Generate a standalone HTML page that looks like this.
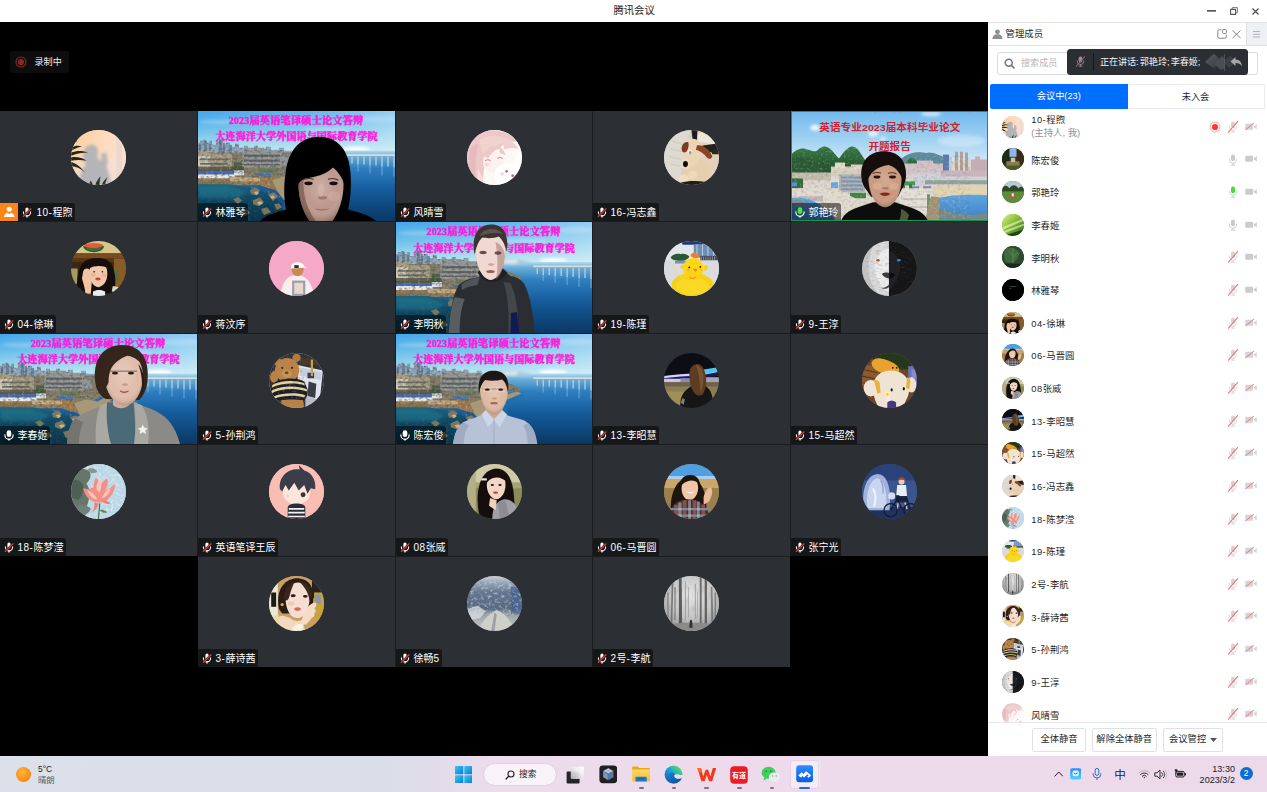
<!DOCTYPE html>
<html lang="zh-CN"><head><meta charset="utf-8"><title>腾讯会议</title><style>
*{box-sizing:border-box;margin:0;padding:0}
html,body{width:1267px;height:792px;overflow:hidden;background:#000;font-family:"Liberation Sans", "Noto Sans CJK SC", sans-serif;}
#root{position:relative;width:1267px;height:792px;overflow:hidden;background:#000}
.abs{position:absolute}
#title{left:0;top:0;width:1267px;height:22px;background:#fff;color:#1a1a1a;font-size:10.300px;line-height:22px;text-align:center}
#title span{position:absolute;left:613.500px;top:0;white-space:nowrap}
.tile{position:absolute;background:#2c2f33;overflow:hidden}
.tile .av{position:absolute;width:55px;height:55px;border-radius:50%;overflow:hidden;left:50%;margin-left:-27.5px;top:18.5px}
.lbl{position:absolute;left:0;bottom:0;height:17.600px;overflow:hidden;background:rgba(0,0,0,.5);color:#fff;font-size:10px;line-height:19.600px;padding:0 2.600px 0 17.400px;border-radius:0 3px 0 0;white-space:nowrap}
.lbl svg{position:absolute;left:4px;top:3.700px;width:10px;height:11px}
.lbl .d{letter-spacing:.55px}.row .d{letter-spacing:.5px}
.host{position:absolute;left:0;bottom:0;width:18px;height:18px;background:#ff8418}
#side{left:988px;top:22px;width:279px;height:734px;background:#fff;border-top:1px solid #e4e4e6}
.row{position:absolute;left:0;width:279px;height:32px;font-size:9.400px;color:#1f1f1f}
.row .sa{position:absolute;left:13.5px;top:5px;width:22px;height:22px;border-radius:50%;overflow:hidden}
.row .nm{position:absolute;left:43.200px;top:1.300px;line-height:32px;white-space:nowrap}
.btn{position:absolute;top:706px;height:23.5px;border:1px solid #dfe1e6;border-radius:2px;background:#fff;font-size:9.3px;line-height:21.5px;text-align:center;color:#1f1f1f;white-space:nowrap}
#task{left:0;top:756px;width:1267px;height:36px;background:linear-gradient(90deg,#dbe0ea 0px,#d9dee9 380px,#e2dcea 435px,#ecdcec 490px,#eddaeb 800px,#ecd9ea 1267px)}

.vid{position:absolute;left:0;top:0;display:block}
.vt{font-family:"Liberation Serif","Noto Serif CJK SC",serif;font-weight:900}
.vs{font-family:"Liberation Sans","Noto Sans CJK SC",sans-serif;font-weight:700}
</style></head><body><div id="root">
<svg width="0" height="0" style="position:absolute">
<defs>
<symbol id="micoff" viewBox="0 0 20 22">
  <rect x="6.800" y="1" width="6.400" height="12" rx="3.200" fill="#fff"/>
  <path d="M2.800 9.500v1a7.200 7.200 0 0 0 14.400 0v-1" fill="none" stroke="#fff" stroke-width="2.100" stroke-linecap="round"/>
  <path d="M10 17v3.200" stroke="#fff" stroke-width="2.200" stroke-linecap="round"/>
  <path d="M2.500 19L18 3.500" stroke="#17191b" stroke-width="4"/>
  <path d="M2.500 19L18 3.500" stroke="#e8392d" stroke-width="2.200" stroke-linecap="round"/>
</symbol>
<symbol id="micon" viewBox="0 0 20 22">
  <rect x="5.400" y="0.500" width="9.200" height="13.500" rx="4.600" fill="#fff"/>
  <path d="M1.800 9.500v1a8.200 8.200 0 0 0 16.400 0v-1" fill="none" stroke="#fff" stroke-width="2.300" stroke-linecap="round"/>
  <path d="M10 18v2.6" stroke="#fff" stroke-width="2.2" stroke-linecap="round"/>
</symbol>
<symbol id="mictalk" viewBox="0 0 20 22">
  <rect x="5.400" y="0.500" width="9.200" height="13.500" rx="4.600" fill="#46e83c"/>
  <path d="M1.800 9.500v1a8.200 8.200 0 0 0 16.400 0v-1" fill="none" stroke="#fff" stroke-width="2.300" stroke-linecap="round"/>
  <path d="M10 18v2.6" stroke="#fff" stroke-width="2.2" stroke-linecap="round"/>
</symbol>
<symbol id="smic" viewBox="0 0 20 24">
  <rect x="6" y="1" width="8" height="13.5" rx="4" fill="#c9cbcf"/>
  <path d="M2.8 10.5v1a7.2 7.2 0 0 0 14.4 0v-1" fill="none" stroke="#c9cbcf" stroke-width="1.8" stroke-linecap="round"/>
  <path d="M10 19v3M6.5 22.3h7" stroke="#c9cbcf" stroke-width="1.8" stroke-linecap="round"/>
</symbol>
<symbol id="smictalk" viewBox="0 0 20 24">
  <rect x="6" y="1" width="8" height="13.5" rx="4" fill="#3fe22c"/>
  <path d="M2.8 10.5v1a7.2 7.2 0 0 0 14.4 0v-1" fill="none" stroke="#c9cbcf" stroke-width="1.8" stroke-linecap="round"/>
  <path d="M10 19v3M6.5 22.3h7" stroke="#c9cbcf" stroke-width="1.8" stroke-linecap="round"/>
</symbol>
<symbol id="smicoff" viewBox="0 0 20 24">
  <rect x="6" y="1" width="8" height="13.5" rx="4" fill="#d3d4d8"/>
  <path d="M2.8 10.5v1a7.2 7.2 0 0 0 14.4 0v-1" fill="none" stroke="#d3d4d8" stroke-width="1.8" stroke-linecap="round"/>
  <path d="M10 19v3M6.5 22.3h7" stroke="#d3d4d8" stroke-width="1.8" stroke-linecap="round"/>
  <path d="M0.500 22.500L19.500 1" stroke="#f6776f" stroke-width="2.300" stroke-linecap="round"/>
</symbol>
<symbol id="scam" viewBox="0 0 26 16">
  <rect x="0.5" y="1.5" width="17" height="13" rx="2.2" fill="#c9cbcf"/>
  <path d="M18.300 8l7.200-6v12z" fill="#c9cbcf"/>
</symbol>
<symbol id="scamoff" viewBox="0 0 26 16">
  <rect x="0.5" y="1.5" width="17" height="13" rx="2.2" fill="#d3d4d8"/>
  <path d="M18.300 8l7.200-6v12z" fill="#d3d4d8"/>
  <path d="M0.500 15.500L19 0.300" stroke="#f6776f" stroke-width="2.100" stroke-linecap="round"/>
</symbol>
</defs></svg>

<div id="title" class="abs"><span>腾讯会议</span><svg class="abs" style="left:1207px;top:10.200px" width="9.200" height="1.700"><rect width="9.200" height="1.700" fill="#58595d"/></svg><svg class="abs" style="left:1229.600px;top:6.800px" width="8" height="8" viewBox="0 0 16 16"><path d="M1.200 4.800h10V14.800H1.200z" fill="none" stroke="#55565a" stroke-width="2.200" stroke-linejoin="round"/><path d="M4.500 4V1.200h10.300v10.300H12" fill="none" stroke="#6a6b70" stroke-width="1.800" stroke-linejoin="round"/></svg><svg class="abs" style="left:1252.200px;top:7.600px" width="7" height="7" viewBox="0 0 14 14"><path d="M1 1l12 12M13 1L1 13" stroke="#4a4b4f" stroke-width="2.300"/></svg></div>
<div class="abs" style="left:10.200px;top:50.500px;width:59.200px;height:22.300px;background:#0d0d0d;border-radius:3px"></div><svg class="abs" style="left:15px;top:55.500px" width="12" height="12" viewBox="0 0 12 12"><circle cx="6" cy="6" r="5" fill="none" stroke="#8a2823" stroke-width="1.100"/><circle cx="6" cy="6" r="3.100" fill="#8c2621"/></svg><div class="abs" style="left:34.500px;top:50.500px;line-height:22px;font-size:9.100px;color:#ececec;white-space:nowrap">录制中</div>
<div class="abs" style="left:0;top:111px;width:988px;height:445px;background:#1b1c1e"></div><div class="abs" style="left:198px;top:556px;width:592px;height:111px;background:#1b1c1e"></div><div class="tile" style="left:0px;top:111px;width:197px;height:110px"><div class="av"><svg width="55" height="55" viewBox="0 0 100 100" style="display:block"><defs><filter id="avb1" x="-5%" y="-5%" width="110%" height="110%"><feGaussianBlur stdDeviation="1.3"/></filter></defs><defs><linearGradient id="a1_1" x1="0" y1="0" x2="1" y2="0.35"><stop offset="0" stop-color="#fbcc9f"/><stop offset="0.5" stop-color="#fdd9b8"/><stop offset="1" stop-color="#fbe2d2"/></linearGradient><linearGradient id="a1b_1" x1="0" y1="0" x2="0" y2="1"><stop offset="0.4" stop-color="#f4dcd8" stop-opacity="0"/><stop offset="1" stop-color="#e9dcdc" stop-opacity=".8"/></linearGradient><filter id="a1f_1" x="-20%" y="-20%" width="140%" height="140%"><feGaussianBlur stdDeviation="2.600"/></filter><filter id="a1g_1" x="-20%" y="-20%" width="140%" height="140%"><feGaussianBlur stdDeviation="0.900"/></filter></defs><rect width="100" height="100" fill="#fbd6b8"/><g filter="url(#avb1)">
<rect width="100" height="100" fill="url(#a1_1)"/><rect width="100" height="100" fill="url(#a1b_1)"/><rect x="82" y="0" width="11" height="100" fill="#ecd6cf" opacity=".8" filter="url(#a1g_1)"/>
<g filter="url(#a1f_1)"><path d="M14 100c2-18 6-30 14-38-6-6-8-16-4-26 4-10 16-12 22-6 4 4 4 10 2 16l2 8c6 2 10 6 14 12 4 10 8 20 8 34z" fill="#a9aeb6" opacity=".85"/><path d="M55 44c2-4 8-4 10 0l2 14c0 4-2 6-4 8l-8-4z" fill="#a9aeb6" opacity=".8"/></g>
<g filter="url(#a1g_1)"><path d="M0 41c10-4 22-4 31 0-10 0-20 2-31 6zM0 50c10-2 20 0 28 6-10-2-18-2-28 0zM0 32c8-4 14-4 20-2-8 2-14 4-20 8zM0 58c8 2 18 8 26 20-8-8-16-12-26-12zM0 24c4-2 8-4 12-4-4 2-8 6-12 8z" fill="#222c1a"/>
<path d="M44 100c2-6 6-12 10-16-2 6-2 10-2 16zM56 100c2-6 6-10 10-14-2 6-4 10-4 14zM32 100l4-8 4 8z" fill="#2a3320"/></g></g></svg></div><div class="host"><svg viewBox="0 0 18 18" width="18" height="18"><circle cx="9.200" cy="6.300" r="2.500" fill="#fff"/><path d="M3.800 14c.5-2.800 2-4 3.600-4.300l1.800 1.600 1.800-1.600c1.600.3 3.100 1.500 3.600 4.300z" fill="#fff"/></svg></div><div class="lbl" style="left:18px;border-radius:0 3px 0 0;padding-left:18.400px"><svg><use href="#micoff"/></svg><span class="d">10-</span>程煦</div></div>
<div class="tile" style="left:198px;top:111px;width:197px;height:110px"><svg class="vid" width="197" height="110" viewBox="0 0 197 111" preserveAspectRatio="none">
<defs>
<linearGradient id="sky1" x1="0" y1="0" x2="0" y2="1"><stop offset="0" stop-color="#46a6ea"/><stop offset="0.35" stop-color="#66bdea"/><stop offset="0.7" stop-color="#9ad6ec"/><stop offset="1" stop-color="#d4eef4"/></linearGradient>
<linearGradient id="skyr1" x1="0" y1="0" x2="1" y2="0"><stop offset="0" stop-color="#fff" stop-opacity="0"/><stop offset="0.55" stop-color="#e4f4fb" stop-opacity=".18"/><stop offset="1" stop-color="#e4f4fb" stop-opacity=".5"/></linearGradient>
<linearGradient id="seaR1" x1="0" y1="0" x2="0" y2="1"><stop offset="0" stop-color="#b4dcec"/><stop offset="0.08" stop-color="#6aaed8"/><stop offset="0.25" stop-color="#2f7fc0"/><stop offset="0.55" stop-color="#155c9c"/><stop offset="1" stop-color="#0a3864"/></linearGradient>
<linearGradient id="seaL1" x1="0" y1="0" x2="0" y2="1"><stop offset="0" stop-color="#176683"/><stop offset="0.35" stop-color="#0c4a66"/><stop offset="1" stop-color="#08334a"/></linearGradient>
<linearGradient id="cty1" x1="0" y1="0" x2="0" y2="1"><stop offset="0" stop-color="#7f9bb6"/><stop offset="1" stop-color="#9fb0bc"/></linearGradient>
<filter id="b11" x="-10%" y="-10%" width="120%" height="120%"><feGaussianBlur stdDeviation="0.600"/></filter>
<filter id="b21" x="-10%" y="-10%" width="120%" height="120%"><feGaussianBlur stdDeviation="1.400"/></filter>
<filter id="b31" x="-20%" y="-20%" width="140%" height="140%"><feGaussianBlur stdDeviation="3"/></filter>
<radialGradient id="fg1" cx="0.5" cy="0.42" r="0.62"><stop offset="0" stop-color="#fff" stop-opacity=".22"/><stop offset="0.6" stop-color="#fff" stop-opacity="0"/><stop offset="1" stop-color="#3a1c10" stop-opacity=".38"/></radialGradient><filter id="bp1" x="-5%" y="-5%" width="110%" height="110%"><feGaussianBlur stdDeviation="0.450"/></filter>
<filter id="nz1" x="0" y="0" width="100%" height="100%"><feTurbulence type="fractalNoise" baseFrequency="0.3 0.38" numOctaves="2" seed="7"/><feColorMatrix type="matrix" values="0 0 0 0 0.08  0 0 0 0 0.09  0 0 0 0 0.1  0 0 0 -3.2 1.75"/></filter>
<filter id="nl1" x="0" y="0" width="100%" height="100%"><feTurbulence type="fractalNoise" baseFrequency="0.36 0.42" numOctaves="2" seed="23"/><feColorMatrix type="matrix" values="0 0 0 0 0.96  0 0 0 0 0.94  0 0 0 0 0.88  0 0 0 -3.6 1.55"/></filter>
<clipPath id="land1"><path d="M0 32h2v-2h3v-1h3v3h3v-2h3v4h4v-4h3v-2h4v6h3v-2h4v4h5v-3h4v4h5v-2h4v3h6v-3h4v3h8v-2h5v3h8v-2h5v3h8l6 2 24 13 2 3-18 4-14 10-6 18-10 6-14-4-24-10-30-6H0z"/></clipPath>
<clipPath id="bay1"><path d="M0 74h32l30 6 14 6 10 10 2 15H0z"/></clipPath>
</defs>
<rect width="197" height="46" fill="url(#sky1)"/><rect width="197" height="46" fill="url(#skyr1)"/>
<g filter="url(#b21)"><ellipse cx="158" cy="38.500" rx="14" ry="2.600" fill="#fff" opacity=".9"/><ellipse cx="128" cy="19" rx="24" ry="2.500" fill="#fff" opacity=".22"/><ellipse cx="24" cy="11" rx="22" ry="2" fill="#fff" opacity=".25"/><ellipse cx="180" cy="8" rx="20" ry="3" fill="#fff" opacity=".2"/></g>
<rect y="40" width="197" height="71" fill="url(#seaR1)"/>
<g filter="url(#b21)"><path d="M100 40c6-3 12-4 18-3 6 1 10 2 16 3v2h-34z" fill="#a9c4d6"/><path d="M108 38h14v3h-14z" fill="#e6eef2"/></g>
<g filter="url(#b11)">
<path d="M0 32h2v-2h3v-1h3v3h3v-2h3v4h4v-4h3v-2h4v6h3v-2h4v4h5v-3h4v4h5v-2h4v3h6v-3h4v3h8v-2h5v3h8v-2h5v3h8l6 2v8H0z" fill="url(#cty1)"/>
<path d="M1 33h2v11H1zM6 30h3v14H6zM11 33h2v11h-2zM21 29h3v16h-3zM25 32h2v12h-2zM31 34h3v10h-3z" fill="#5f7890" opacity=".8"/>
<path d="M0 42h94l14 6 16 6 2 3-18 2-14 8-34 8H0z" fill="#857b66"/>
<path d="M0 40h14v5H0zM12 43h22v16H12z" fill="#a59c84"/><path d="M0 45h12v14H0z" fill="#cfc8b6"/>
<path d="M44 40h40v17H44z" fill="#94968f"/><path d="M46 37h20v4H46z" fill="#8f969a"/><path d="M46 44h36v2.200H46zM46 49h36v2.200H46zM46 53.500h36v1.500H46z" fill="#5e6468"/><path d="M84 45h8v10h-8z" fill="#8f979c"/>
<path d="M2 48h28v1.800H2zM2 52.500h28v1.800H2z" fill="#6f6a5c"/><path d="M0 56h46v5H0z" fill="#4a4a38" opacity=".75"/>
<path d="M36 52h8v8h-8z" fill="#3f5a3a" opacity=".8"/><path d="M60 58h20v4H60z" fill="#5a7a4a" opacity=".7"/>
<path d="M0 61h36l1 3H0z" fill="#3a6cc8"/><path d="M0 64h37v4H0z" fill="#e8e8e6"/><path d="M36 60h10v5H36z" fill="#dfe4ea"/>
<path d="M58 63h15l-1 3H59z" fill="#3f74c4"/>
<path d="M0 68h34l30-2 18 2 8 6 4 10-6 4-10-8-20-6-30-4H0z" fill="#a07c4e"/>
<path d="M0 71h32v3.500H0z" fill="#8a7046"/><path d="M32 67h30v4H32z" fill="#c8a878"/>
</g>
<g clip-path="url(#land1)"><rect width="130" height="100" filter="url(#nz1)" opacity=".6"/><rect width="130" height="100" filter="url(#nl1)" opacity=".22"/></g>
<path d="M0 74h32l30 6 14 6 10 10 2 15H0z" fill="url(#seaL1)"/>
<g clip-path="url(#bay1)"><rect y="70" width="100" height="41" filter="url(#nz1)" opacity=".35"/></g>
<g filter="url(#b21)"><path d="M0 76h30l20 6-10 6-40 0z" fill="#2a86a0" opacity=".4"/><path d="M86 92l10-6 14-20 16-8 2 3-14 12-12 22-12 16h-8z" fill="#1d6fa6" opacity=".6"/></g>
<g filter="url(#b11)">
<path d="M74 70l12-4 12 2 10-6 14-4 4 2-14 6-10 10-8 12-8 2-6-8z" fill="#a89878"/>
<path d="M52 80l5-3 5 3-3 5-6-1zM55 90l7-3 4 5-5 4-6-2zM35 89l5-2 4 3-4 4zM63 99l6-2 4 5-7 3zM70 84l6-2 4 4-5 5zM44 101l5-2 3 4-5 3zM76 94l5-1 3 4-5 3zM28 98l4-2 3 3-4 3z" fill="#8f7c5c" opacity=".85"/>
<path d="M56 82l3-1 2 2-3 2zM59 92l4-1 2 2-4 2zM72 86l3-1 2 2-3 2z" fill="#c2b28e"/>
<path d="M138 43.600h59v2h-59z" fill="#cfdfea"/><path d="M138 45.600h59v1.200h-59z" fill="#7fa2bc"/>
<path d="M142 46v6M148 46v7M154 46v7M160 46v8M166 46v8M172 46v9M178 46v9M184 46v10M190 46v10M196 46v11" stroke="#b9cfde" stroke-width="1.300"/>
<path d="M148 53v6M160 54v7M172 55v8M184 56v9M196 57v9" stroke="#9cc4de" stroke-width="1.400" opacity=".45"/>
</g>
<text class="vt" x="98.100" y="13.100" font-size="10" text-anchor="middle" textLength="134.800" lengthAdjust="spacingAndGlyphs" fill="#fa1cdc" stroke="#fa1cdc" stroke-width="0.420">2023届英语笔译硕士论文答辩</text><text class="vt" x="98.600" y="29.600" font-size="10.400" text-anchor="middle" textLength="162.300" lengthAdjust="spacingAndGlyphs" fill="#fa1cdc" stroke="#fa1cdc" stroke-width="0.420">大连海洋大学外国语与国际教育学院</text>
<g filter="url(#bp1)">
<path d="M62 111c6-6 16-9 26-11.500-2-11-2.500-24-0.500-36C90 40 102 26 121 26c19 0 30 14 31.500 36 1 14 0 27-2.500 37.500 10 2.500 22 6 28 11.500z" fill="#060505"/>
<path d="M100.500 74c-0.500-13 8-21 22.500-21s23 8 22.500 21c0 14-4 27-11 37h-23c-7-10-11-23-11-37z" fill="#bc978c"/>
<path d="M100.500 74c-0.500-13 8-21 22.500-21s23 8 22.500 21c0 14-4 27-11 37h-23c-7-10-11-23-11-37z" fill="url(#fg1)"/>
<path d="M100.500 74c0 14 4 27 11 37h6c-8-12-13-26-12-42z" fill="#4a2e26" opacity=".45"/>
<path d="M99 78c0-16 6-24 12-26l28-1c5 4 8 12 8 24-3-8-7-14-12-18-7 7-18 10-28 11-4 2-7 5-8 10z" fill="#060505"/>
</g>
<g filter="url(#b11)">
<ellipse cx="110.500" cy="73" rx="4.200" ry="1.900" fill="#1a100e"/><ellipse cx="135.500" cy="73" rx="4.200" ry="1.900" fill="#1a100e"/>
<path d="M105 69.500q5.500-2.500 10.500-.5M130 69q5.500-2 10.500.8" stroke="#2a1a16" stroke-width="1.100" fill="none" opacity=".8"/>
<ellipse cx="124.500" cy="87.500" rx="4.500" ry="1.800" fill="#7e564c" opacity=".55"/>
<path d="M116 98.500q8.500 2.500 16.500-.5-8 4.500-16.500.5z" fill="#8e4f4c"/>
<ellipse cx="136" cy="86" rx="6" ry="5" fill="#dcb8ae" opacity=".35"/><ellipse cx="123" cy="80" rx="3" ry="7" fill="#e0beb2" opacity=".4"/>
</g></svg><div class="lbl"><svg><use href="#micoff"/></svg>林雅琴</div></div>
<div class="tile" style="left:396px;top:111px;width:196px;height:110px"><div class="av"><svg width="55" height="55" viewBox="0 0 100 100" style="display:block"><defs><filter id="avb2" x="-5%" y="-5%" width="110%" height="110%"><feGaussianBlur stdDeviation="1.3"/></filter></defs><rect width="100" height="100" fill="#f6dfe2"/><g filter="url(#avb2)"><rect width="100" height="100" fill="#fdf7f6"/>
<path d="M0 20C10 4 40-4 70 4c10 4 18 10 24 18-12-2-22 0-30 6-6 8-10 8-18 10-8 4-12 12-14 22l-4 40H0z" fill="#ecc9c8"/>
<path d="M4 40c4-10 10-14 16-14-4 20-6 44-4 74H4z" fill="#e6b4bc" opacity=".7"/>
<path d="M22 18c16-10 40-10 56 2-10 0-18 4-24 10-8 2-18 6-24 14-4-8-6-18-8-26z" fill="#f0d2cf"/>
<path d="M62 12c12 2 24 10 32 22-8-2-18-2-26 2z" fill="#efcfd0"/>
<ellipse cx="48" cy="58" rx="19" ry="19" fill="#fdf1ef"/>
<path d="M30 46c4-12 16-18 28-16-6 6-14 12-20 22zM58 30c6 2 10 8 12 16l-10-4z" fill="#ecc9c8"/>
<path d="M33 56q5-4 10 0M55 52q5-4 10 0" stroke="#e08a9a" stroke-width="2" fill="none"/>
<ellipse cx="36" cy="63" rx="4" ry="2.500" fill="#f8c8d0" opacity=".8"/>
<path d="M52 72c6-10 20-14 32-10l10-22 4 2-4 26c4 10 2 22-6 32H56c-6-8-8-18-4-28z" fill="#ffffff"/>
<circle cx="72" cy="75" r="2.500" fill="#c9647a"/><circle cx="83" cy="83" r="2.500" fill="#c9647a"/><ellipse cx="64" cy="80" rx="4" ry="3" fill="#fbd6dc"/>
<path d="M20 70l14 30H18z" fill="#f7dde2"/></g></svg></div><div class="lbl"><svg><use href="#micoff"/></svg>风晴雪</div></div>
<div class="tile" style="left:593px;top:111px;width:197px;height:110px"><div class="av"><svg width="55" height="55" viewBox="0 0 100 100" style="display:block"><defs><filter id="avb3" x="-5%" y="-5%" width="110%" height="110%"><feGaussianBlur stdDeviation="1.3"/></filter></defs><rect width="100" height="100" fill="#cfc6b6"/><g filter="url(#avb3)"><rect width="100" height="100" fill="#d6d1c8"/>
<path d="M0 0h48L36 40 28 100H0z" fill="#dedad2"/><path d="M60 0h40v100H60z" fill="#e2d2bc"/><path d="M62 6c10-4 24 0 34 10l-4 14c-10-6-20-8-30-8z" fill="#efe6da"/>
<path d="M50 0h11l-2 30-6-2z" fill="#1e1c1b"/><path d="M70 28l30-4v14l-24 4z" fill="#23211f"/><path d="M84 36h16v8H88z" fill="#2a2624"/>
<path d="M14 20l20 6M12 34l22 6M10 48l22 6M12 62l18 4" stroke="#b8b4ac" stroke-width="1.200" opacity=".7"/>
<path d="M38 60c-4 12-4 26 2 36h40c8-8 8-22 2-34-8-10-34-12-44-2z" fill="#e6cfae"/>
<path d="M34 36c0-12 8-20 18-20s16 8 16 18c0 8-2 14-4 20-4 10-12 14-20 12-8-2-12-12-10-30z" fill="#ecd5b4"/>
<ellipse cx="40" cy="62" rx="9" ry="10" fill="#efd9ba"/>
<path d="M32 34c0-8 6-14 12-12 2 6 0 14-4 18-4 2-8 0-8-6z" fill="#7c3b22"/>
<path d="M60 28c10-2 22 6 28 20-2 4-6 6-10 2-6-8-14-12-20-14z" fill="#8a4426"/>
<ellipse cx="39" cy="62" rx="4.500" ry="5.500" fill="#0f0d0c"/><ellipse cx="47.500" cy="41" rx="2.400" ry="3" fill="#2a2f52"/><ellipse cx="47" cy="40" rx="4" ry="4.500" fill="#fff" opacity=".5"/>
<ellipse cx="36" cy="88" rx="9" ry="7" fill="#f0ddc2"/><ellipse cx="52" cy="82" rx="8" ry="8" fill="#edd8b8"/>
<path d="M30 96c12-4 30-4 44-2l-2 6H34z" fill="#1d1b1a"/></g></svg></div><div class="lbl"><svg><use href="#micoff"/></svg><span class="d">16-</span>冯志鑫</div></div>
<div class="tile" style="left:791px;top:111px;width:197px;height:110px"><svg class="vid" width="197" height="110" viewBox="0 0 197 111" preserveAspectRatio="none">
<defs>
<linearGradient id="sky22" x1="0" y1="0" x2="0" y2="1"><stop offset="0" stop-color="#72b9ee"/><stop offset="0.5" stop-color="#9dd0f2"/><stop offset="1" stop-color="#d4e9f5"/></linearGradient>
<linearGradient id="hl2" x1="0" y1="0" x2="0" y2="1"><stop offset="0" stop-color="#387a44"/><stop offset="0.6" stop-color="#265a30"/><stop offset="1" stop-color="#244c2a"/></linearGradient>
<linearGradient id="w22" x1="0" y1="0" x2="0" y2="1"><stop offset="0" stop-color="#5fa6de"/><stop offset="1" stop-color="#3a80c8"/></linearGradient>
<filter id="c12" x="-10%" y="-10%" width="120%" height="120%"><feGaussianBlur stdDeviation="0.650"/></filter>
<filter id="b12" x="-10%" y="-10%" width="120%" height="120%"><feGaussianBlur stdDeviation="0.600"/></filter>
<filter id="bp2" x="-5%" y="-5%" width="110%" height="110%"><feGaussianBlur stdDeviation="0.450"/></filter>
<filter id="c22" x="-10%" y="-10%" width="120%" height="120%"><feGaussianBlur stdDeviation="1.800"/></filter>
<filter id="nz2" x="0" y="0" width="100%" height="100%"><feTurbulence type="fractalNoise" baseFrequency="0.3 0.36" numOctaves="2" seed="11"/><feColorMatrix type="matrix" values="0 0 0 0 0.1  0 0 0 0 0.14  0 0 0 0 0.12  0 0 0 -3.2 1.7"/></filter>
<filter id="nl2" x="0" y="0" width="100%" height="100%"><feTurbulence type="fractalNoise" baseFrequency="0.34 0.4" numOctaves="2" seed="31"/><feColorMatrix type="matrix" values="0 0 0 0 0.98  0 0 0 0 0.96  0 0 0 0 0.94  0 0 0 -3.4 1.5"/></filter>
<clipPath id="land22"><path d="M0 62V44c4-4 9-7 14-6 5 1 8 4 12 2 3-3 6-5 9-4 5 1 9 8 13 12 4-6 8-11 12-12 5-1 8 4 11 9l8 10 20-8 20-2 20 0 40 0v90H0z"/></clipPath>
<radialGradient id="fg2" cx="0.5" cy="0.42" r="0.62"><stop offset="0" stop-color="#fff" stop-opacity=".2"/><stop offset="0.6" stop-color="#fff" stop-opacity="0"/><stop offset="1" stop-color="#3a1c10" stop-opacity=".4"/></radialGradient>
</defs>
<rect width="197" height="54" fill="url(#sky22)"/>
<g filter="url(#c22)"><ellipse cx="24" cy="17" rx="4.500" ry="3" fill="#fff" opacity=".85"/><ellipse cx="82" cy="23" rx="5" ry="3" fill="#fff" opacity=".7"/><ellipse cx="92" cy="28" rx="3" ry="2" fill="#fff" opacity=".6"/><ellipse cx="140" cy="3" rx="10" ry="2.500" fill="#fff" opacity=".6"/><ellipse cx="170" cy="30" rx="24" ry="6" fill="#fff" opacity=".3"/></g>
<rect y="50" width="197" height="61" fill="#ddd6cc"/>
<g filter="url(#c12)">
<path d="M108 50c4-4 10-7 16-8 6-1 10 1 14 0 6 0 10 3 16 5l4 8h-50z" fill="#5d8c9c"/>
<path d="M0 62V44c4-4 9-7 14-6 5 1 8 4 12 2 3-3 6-5 9-4 5 1 9 8 13 12 4-6 8-11 12-12 5-1 8 4 11 9l8 12-12 5-30 4H0z" fill="url(#hl2)"/>
<path d="M0 50c8-5 18-4 26 2l10 10-10 4H0z" fill="#2a5a32"/>
<path d="M114 54c2-4 4-6 6.500-6.500 3 .5 5 3 6.500 6.500z" fill="#2f6a3a"/>
<path d="M152 44h6v20h-6z" fill="#5a7cae"/><path d="M158 46h3v16h-3z" fill="#c6ccd6"/>
<path d="M164 41h3v22h-3zM169 41h3v22h-3zM174 42h3v21h-3z" fill="#b69e9a"/><path d="M180 49h17v14h-17zM184 46h5v4h-5z" fill="#c4aeb6"/>
<path d="M112 53h40v12h-40z" fill="#d4c2c6"/><path d="M126 50h16v5h-16z" fill="#d6c0c4"/>
<path d="M122 62h75v14h-75z" fill="#cfd0d8"/><path d="M150 60h47v6h-47z" fill="#c9b6bc"/>
<path d="M134 70h63v4h-63z" fill="#7f947e" opacity=".75"/>
<path d="M40 56h34v10H40z" fill="#d8d0c0"/><path d="M44 52h10v6H44z" fill="#e6dccb"/><path d="M60 54h12v5H60z" fill="#e2d4c6"/>
<path d="M48 64h26v18H48z" fill="#b0b4ba"/><path d="M50 66h22v2.200H50zM50 70h22v2.200H50zM50 74h22v2.200H50zM50 78h22v2H50z" fill="#8696ac"/>
<path d="M40 66h8v14h-8z" fill="#e0dcd4"/><path d="M40 72h7v6h-7z" fill="#5fa8e0"/>
<path d="M0 62h40v8H0z" fill="#c4bcac"/><path d="M0 68h12v10H0z" fill="#346a3a"/><path d="M0 72h6v4H0z" fill="#4a9ad8"/>
<path d="M59 82.500h16v5.500H59z" fill="#3f8444"/>
<path d="M114 71h10v4h-10z" fill="#3f9a50"/><path d="M120 76h8v4h-8zM132 76h8v4h-8z" fill="#6a6ab0" opacity=".8"/><path d="M110 74h4v8h-4zM118 74h3v6h-3z" fill="#3a7a40"/>
<path d="M0 78h44l20 10 10 10-6 13H0z" fill="#e2dacf"/>
<path d="M8 86h24v5H8z" fill="#b8aeb0" opacity=".8"/>
<path d="M0 88c10-2 20 1 28 6l12 9 5 8H0z" fill="url(#w22)"/><path d="M0 90c6-1 12 0 18 3l-3 3-15-2z" fill="#8a8c8a" opacity=".8"/>
<path d="M108 78h34v30h-34z" fill="#e3dfd6"/><path d="M110 96h30v2h-30zM110 88h30v1.500h-30z" fill="#c6c0b4"/><path d="M136 84h3v18h-3z" fill="#4a8a4a" opacity=".8"/>
<path d="M142 75h55v9l-20 3-35 1z" fill="#e2d3b4"/>
<path d="M148 88c10-3 28-4 49-3v26h-50c0-8 0-16 1-23z" fill="url(#w22)"/>
<path d="M140 86l9 1-1 24h-14c2-10 4-18 6-25z" fill="#a49478"/><path d="M148 98l20 6 14 1 15-2v8h-49z" fill="#7e8a84" opacity=".9"/>
</g>
<g clip-path="url(#land22)"><rect width="197" height="111" filter="url(#nz2)" opacity=".2"/><rect width="197" height="111" filter="url(#nl2)" opacity=".25"/></g>

<text class="vs" x="98.800" y="0.300" font-size="11" text-anchor="middle" textLength="176" lengthAdjust="spacingAndGlyphs" fill="#c83a44" opacity=".85">大连海洋大学外国语与国际教育学院</text>
<text class="vs" x="98.800" y="19.700" font-size="10" text-anchor="middle" textLength="141" lengthAdjust="spacingAndGlyphs" fill="#d3222c">英语专业2023届本科毕业论文</text>
<text class="vs" x="98.600" y="39.500" font-size="10" text-anchor="middle" textLength="42.300" lengthAdjust="spacingAndGlyphs" fill="#d3222c">开题报告</text>
<g filter="url(#bp2)">
<path d="M50 111c3-8 10-12 20-15l12-4h22l12 4c10 3 18 7 21 15z" fill="#0e100f"/>
<path d="M70.500 68c-2-17 7-27.500 22.500-27.500 14 0 23 9 22 26-.5 5-2 9-4 12l-4 8H80l-4-6c-3-3.500-5-8-5.500-12.500z" fill="#15110e"/>
<path d="M77.500 68c0-12 6-19 16-19s17 7 17 19c0 14-6 28-16.500 29C84 96 77.500 82 77.500 68z" fill="#c8987c"/>
<path d="M77.500 68c0-12 6-19 16-19s17 7 17 19c0 14-6 28-16.500 29C84 96 77.500 82 77.500 68z" fill="url(#fg2)"/>
<path d="M76 70c0-16 7-23 17.500-23 11 0 17.500 7 18 22-3-8-8-13-14-14.500-8 1-15 5-18 10-1.500 2-2.500 4-3.500 5.500z" fill="#15110e"/>
<path d="M110 99c3 1 6 3 8 6l-2 6h-8c2-4 2-8 2-12z" fill="#7c8a5a" opacity=".6"/>
</g>
<g filter="url(#b12)">
<ellipse cx="86" cy="66.500" rx="3.400" ry="1.500" fill="#24140f"/><ellipse cx="101.500" cy="66.500" rx="3.400" ry="1.500" fill="#24140f"/><path d="M81.500 63q4.500-2 8.500-.3M97 62.800q4.500-1.600 8.500.5" stroke="#2e1c16" stroke-width="1" fill="none" opacity=".8"/>
<path d="M88.500 83.500q5.500-2.500 11 0-5.500 4.500-11 0z" fill="#8a2426"/>
<ellipse cx="94.500" cy="78" rx="3.200" ry="1.300" fill="#9a6a52" opacity=".7"/>
<ellipse cx="86" cy="76" rx="4.500" ry="3.500" fill="#e4b89c" opacity=".45"/><ellipse cx="103" cy="76" rx="4.500" ry="3.500" fill="#e4b89c" opacity=".45"/>
</g></svg><div class="lbl"><svg><use href="#mictalk"/></svg>郭艳玲</div><div class="abs" style="left:0;top:0;right:0;bottom:0;border:1px solid #0f9a54"></div></div>
<div class="tile" style="left:0px;top:222px;width:197px;height:111px"><div class="av"><svg width="55" height="55" viewBox="0 0 100 100" style="display:block"><defs><filter id="avb4" x="-5%" y="-5%" width="110%" height="110%"><feGaussianBlur stdDeviation="1.3"/></filter></defs><rect width="100" height="100" fill="#5a4820"/><g filter="url(#avb4)"><rect width="100" height="100" fill="#3d2812"/>
<rect width="100" height="23" fill="#d5c68c"/><rect y="22" width="100" height="10" fill="#7a4c1e"/><rect y="32" width="100" height="6" fill="#5a3616"/>
<path d="M78 32h22v60H78z" fill="#8a5c26"/><path d="M76 52h10v20H76z" fill="#4f6e42"/><path d="M0 50h12v28H0z" fill="#a39c5c"/>
<path d="M22 9c2 14 36 16 38 0z" fill="#2f5a2c"/><path d="M26 12c4 8 26 9 30 0z" fill="#3f6e38"/><ellipse cx="41" cy="8" rx="17.500" ry="4.500" fill="#e85a3c"/>
<path d="M12 96c-4-26 2-52 14-60 8-6 32-8 42 0 12 10 16 36 10 60z" fill="#17100c"/>
<path d="M34 52c2-12 12-16 20-14 8 2 12 10 12 22 0 12-6 22-16 24-10 0-18-14-16-32z" fill="#f0c9aa"/>
<path d="M32 50c2-10 10-16 18-16 10 0 16 6 18 16-10-6-24-6-36 0z" fill="#17100c"/>
<ellipse cx="40" cy="62" rx="5" ry="3.500" fill="#f2a58e" opacity=".7"/><ellipse cx="60" cy="62" rx="5" ry="3.500" fill="#f2a58e" opacity=".7"/>
<ellipse cx="49" cy="69" rx="5" ry="2.600" fill="#d8432e"/><circle cx="42" cy="56" r="1.500" fill="#2a1a12"/><circle cx="57" cy="56" r="1.500" fill="#2a1a12"/>
<path d="M22 56c2-8 12-8 14 0l2 16-2 24H26c0-10-4-20-6-28z" fill="#efc5a4"/>
<path d="M40 92c6-4 16-4 22 0v8H40z" fill="#e9ecef"/><path d="M76 82l12 2-2 10-12-2z" fill="#d8d8d0"/></g></svg></div><div class="lbl"><svg><use href="#micoff"/></svg><span class="d">04-</span>徐琳</div></div>
<div class="tile" style="left:198px;top:222px;width:197px;height:111px"><div class="av"><svg width="55" height="55" viewBox="0 0 100 100" style="display:block"><defs><filter id="avb5" x="-5%" y="-5%" width="110%" height="110%"><feGaussianBlur stdDeviation="1.3"/></filter></defs><rect width="100" height="100" fill="#f6a9c6"/><g filter="url(#avb5)"><rect width="100" height="100" fill="#f6a9c6"/><path d="M20 100c4-26 14-38 30-38 18 0 28 14 32 38z" fill="#f8eef0"/><rect x="42" y="72" width="24" height="28" fill="#9aa0a8"/><rect x="46" y="76" width="16" height="20" fill="#e8d8d0"/>
<ellipse cx="52" cy="52" rx="11" ry="12" fill="#c98a5a"/><path d="M40 46c2-10 22-10 24 0l6 2-30 2z" fill="#fbfbfb"/><rect x="46" y="44" width="8" height="5" fill="#2a2a2a"/></g></svg></div><div class="lbl"><svg><use href="#micoff"/></svg>蒋汶序</div></div>
<div class="tile" style="left:396px;top:222px;width:196px;height:111px"><svg class="vid" width="196" height="111" viewBox="0 0 197 111" preserveAspectRatio="none">
<defs>
<linearGradient id="sky3" x1="0" y1="0" x2="0" y2="1"><stop offset="0" stop-color="#46a6ea"/><stop offset="0.35" stop-color="#66bdea"/><stop offset="0.7" stop-color="#9ad6ec"/><stop offset="1" stop-color="#d4eef4"/></linearGradient>
<linearGradient id="skyr3" x1="0" y1="0" x2="1" y2="0"><stop offset="0" stop-color="#fff" stop-opacity="0"/><stop offset="0.55" stop-color="#e4f4fb" stop-opacity=".18"/><stop offset="1" stop-color="#e4f4fb" stop-opacity=".5"/></linearGradient>
<linearGradient id="seaR3" x1="0" y1="0" x2="0" y2="1"><stop offset="0" stop-color="#b4dcec"/><stop offset="0.08" stop-color="#6aaed8"/><stop offset="0.25" stop-color="#2f7fc0"/><stop offset="0.55" stop-color="#155c9c"/><stop offset="1" stop-color="#0a3864"/></linearGradient>
<linearGradient id="seaL3" x1="0" y1="0" x2="0" y2="1"><stop offset="0" stop-color="#176683"/><stop offset="0.35" stop-color="#0c4a66"/><stop offset="1" stop-color="#08334a"/></linearGradient>
<linearGradient id="cty3" x1="0" y1="0" x2="0" y2="1"><stop offset="0" stop-color="#7f9bb6"/><stop offset="1" stop-color="#9fb0bc"/></linearGradient>
<filter id="b13" x="-10%" y="-10%" width="120%" height="120%"><feGaussianBlur stdDeviation="0.600"/></filter>
<filter id="b23" x="-10%" y="-10%" width="120%" height="120%"><feGaussianBlur stdDeviation="1.400"/></filter>
<filter id="b33" x="-20%" y="-20%" width="140%" height="140%"><feGaussianBlur stdDeviation="3"/></filter>
<radialGradient id="fg3" cx="0.5" cy="0.42" r="0.62"><stop offset="0" stop-color="#fff" stop-opacity=".22"/><stop offset="0.6" stop-color="#fff" stop-opacity="0"/><stop offset="1" stop-color="#3a1c10" stop-opacity=".38"/></radialGradient><filter id="bp3" x="-5%" y="-5%" width="110%" height="110%"><feGaussianBlur stdDeviation="0.450"/></filter>
<filter id="nz3" x="0" y="0" width="100%" height="100%"><feTurbulence type="fractalNoise" baseFrequency="0.3 0.38" numOctaves="2" seed="7"/><feColorMatrix type="matrix" values="0 0 0 0 0.08  0 0 0 0 0.09  0 0 0 0 0.1  0 0 0 -3.2 1.75"/></filter>
<filter id="nl3" x="0" y="0" width="100%" height="100%"><feTurbulence type="fractalNoise" baseFrequency="0.36 0.42" numOctaves="2" seed="23"/><feColorMatrix type="matrix" values="0 0 0 0 0.96  0 0 0 0 0.94  0 0 0 0 0.88  0 0 0 -3.6 1.55"/></filter>
<clipPath id="land3"><path d="M0 32h2v-2h3v-1h3v3h3v-2h3v4h4v-4h3v-2h4v6h3v-2h4v4h5v-3h4v4h5v-2h4v3h6v-3h4v3h8v-2h5v3h8v-2h5v3h8l6 2 24 13 2 3-18 4-14 10-6 18-10 6-14-4-24-10-30-6H0z"/></clipPath>
<clipPath id="bay3"><path d="M0 74h32l30 6 14 6 10 10 2 15H0z"/></clipPath>
</defs>
<rect width="197" height="46" fill="url(#sky3)"/><rect width="197" height="46" fill="url(#skyr3)"/>
<g filter="url(#b23)"><ellipse cx="158" cy="38.500" rx="14" ry="2.600" fill="#fff" opacity=".9"/><ellipse cx="128" cy="19" rx="24" ry="2.500" fill="#fff" opacity=".22"/><ellipse cx="24" cy="11" rx="22" ry="2" fill="#fff" opacity=".25"/><ellipse cx="180" cy="8" rx="20" ry="3" fill="#fff" opacity=".2"/></g>
<rect y="40" width="197" height="71" fill="url(#seaR3)"/>
<g filter="url(#b23)"><path d="M100 40c6-3 12-4 18-3 6 1 10 2 16 3v2h-34z" fill="#a9c4d6"/><path d="M108 38h14v3h-14z" fill="#e6eef2"/></g>
<g filter="url(#b13)">
<path d="M0 32h2v-2h3v-1h3v3h3v-2h3v4h4v-4h3v-2h4v6h3v-2h4v4h5v-3h4v4h5v-2h4v3h6v-3h4v3h8v-2h5v3h8v-2h5v3h8l6 2v8H0z" fill="url(#cty3)"/>
<path d="M1 33h2v11H1zM6 30h3v14H6zM11 33h2v11h-2zM21 29h3v16h-3zM25 32h2v12h-2zM31 34h3v10h-3z" fill="#5f7890" opacity=".8"/>
<path d="M0 42h94l14 6 16 6 2 3-18 2-14 8-34 8H0z" fill="#857b66"/>
<path d="M0 40h14v5H0zM12 43h22v16H12z" fill="#a59c84"/><path d="M0 45h12v14H0z" fill="#cfc8b6"/>
<path d="M44 40h40v17H44z" fill="#94968f"/><path d="M46 37h20v4H46z" fill="#8f969a"/><path d="M46 44h36v2.200H46zM46 49h36v2.200H46zM46 53.500h36v1.500H46z" fill="#5e6468"/><path d="M84 45h8v10h-8z" fill="#8f979c"/>
<path d="M2 48h28v1.800H2zM2 52.500h28v1.800H2z" fill="#6f6a5c"/><path d="M0 56h46v5H0z" fill="#4a4a38" opacity=".75"/>
<path d="M36 52h8v8h-8z" fill="#3f5a3a" opacity=".8"/><path d="M60 58h20v4H60z" fill="#5a7a4a" opacity=".7"/>
<path d="M0 61h36l1 3H0z" fill="#3a6cc8"/><path d="M0 64h37v4H0z" fill="#e8e8e6"/><path d="M36 60h10v5H36z" fill="#dfe4ea"/>
<path d="M58 63h15l-1 3H59z" fill="#3f74c4"/>
<path d="M0 68h34l30-2 18 2 8 6 4 10-6 4-10-8-20-6-30-4H0z" fill="#a07c4e"/>
<path d="M0 71h32v3.500H0z" fill="#8a7046"/><path d="M32 67h30v4H32z" fill="#c8a878"/>
</g>
<g clip-path="url(#land3)"><rect width="130" height="100" filter="url(#nz3)" opacity=".6"/><rect width="130" height="100" filter="url(#nl3)" opacity=".22"/></g>
<path d="M0 74h32l30 6 14 6 10 10 2 15H0z" fill="url(#seaL3)"/>
<g clip-path="url(#bay3)"><rect y="70" width="100" height="41" filter="url(#nz3)" opacity=".35"/></g>
<g filter="url(#b23)"><path d="M0 76h30l20 6-10 6-40 0z" fill="#2a86a0" opacity=".4"/><path d="M86 92l10-6 14-20 16-8 2 3-14 12-12 22-12 16h-8z" fill="#1d6fa6" opacity=".6"/></g>
<g filter="url(#b13)">
<path d="M74 70l12-4 12 2 10-6 14-4 4 2-14 6-10 10-8 12-8 2-6-8z" fill="#a89878"/>
<path d="M52 80l5-3 5 3-3 5-6-1zM55 90l7-3 4 5-5 4-6-2zM35 89l5-2 4 3-4 4zM63 99l6-2 4 5-7 3zM70 84l6-2 4 4-5 5zM44 101l5-2 3 4-5 3zM76 94l5-1 3 4-5 3zM28 98l4-2 3 3-4 3z" fill="#8f7c5c" opacity=".85"/>
<path d="M56 82l3-1 2 2-3 2zM59 92l4-1 2 2-4 2zM72 86l3-1 2 2-3 2z" fill="#c2b28e"/>
<path d="M138 43.600h59v2h-59z" fill="#cfdfea"/><path d="M138 45.600h59v1.200h-59z" fill="#7fa2bc"/>
<path d="M142 46v6M148 46v7M154 46v7M160 46v8M166 46v8M172 46v9M178 46v9M184 46v10M190 46v10M196 46v11" stroke="#b9cfde" stroke-width="1.300"/>
<path d="M148 53v6M160 54v7M172 55v8M184 56v9M196 57v9" stroke="#9cc4de" stroke-width="1.400" opacity=".45"/>
</g>
<text class="vt" x="98.100" y="13.100" font-size="10" text-anchor="middle" textLength="134.800" lengthAdjust="spacingAndGlyphs" fill="#fa1cdc" stroke="#fa1cdc" stroke-width="0.420">2023届英语笔译硕士论文答辩</text><text class="vt" x="98.600" y="29.600" font-size="10.400" text-anchor="middle" textLength="162.300" lengthAdjust="spacingAndGlyphs" fill="#fa1cdc" stroke="#fa1cdc" stroke-width="0.420">大连海洋大学外国语与国际教育学院</text>
<g filter="url(#bp3)">
<path d="M53 111c1-18 3-36 10-48 6-5 13-7 20-8l4-6h22l6 5c6 1 10 3 14 8 6 12 9 30 10.500 49z" fill="#2b2e31"/>
<path d="M53 111c1-14 2-26 6-36l10 2c-4 10-5 22-5 34z" fill="#595d61"/>
<path d="M66 62c6-4 12-6 18-7l-2 8c-6 1-11 2-16 5z" fill="#5a5e62" opacity=".8"/>
<path d="M108 60c4 12 6 30 5 51h10c0-20-2-38-8-50z" fill="#45494d" opacity=".9"/>
<path d="M82 50l4-3h22l4 4c-4 6-10 9-16 9s-11-4-14-10z" fill="#1f2124"/>
<path d="M80 28c0-16 6-25 15.500-25S111 12 110 28c-1 14-5 29-15 30-9-1-15-15-15-30z" fill="#efd9d2"/>
<path d="M100 20c6 2 9 8 9.500 14-1 10-4 20-9 23 2-8 2-24-.5-37z" fill="#b48c84" opacity=".7"/>
<path d="M79 32C75 13 84 2 96 2.500c12 0 18 10 15 27-2-9-5-13-8-15-4 2-12 2-16 1-4 3-6 9-8 16.500z" fill="#3a3532"/>
<path d="M84 14c4-8 16-10 24-2-8-2-16-1-24 2z" fill="#6a625e" opacity=".7"/>
<path d="M115.500 91l6-1 2.500 21h-9z" fill="#0f1a52"/>
</g>
<g filter="url(#b13)">
<ellipse cx="87.500" cy="30.500" rx="3.600" ry="1.700" fill="#5c3e38" opacity=".9"/><ellipse cx="102.500" cy="31" rx="3.400" ry="1.700" fill="#5c3e38" opacity=".9"/>
<ellipse cx="95" cy="49.500" rx="4.200" ry="1.500" fill="#9a5c54"/>
<ellipse cx="95.500" cy="42.500" rx="3" ry="1.300" fill="#b98c82" opacity=".7"/>
</g></svg><div class="lbl"><svg><use href="#micoff"/></svg>李明秋</div></div>
<div class="tile" style="left:593px;top:222px;width:197px;height:111px"><div class="av"><svg width="55" height="55" viewBox="0 0 100 100" style="display:block"><defs><filter id="avb6" x="-5%" y="-5%" width="110%" height="110%"><feGaussianBlur stdDeviation="1.3"/></filter></defs><rect width="100" height="100" fill="#e4e9ec"/><g filter="url(#avb6)"><rect width="100" height="100" fill="#d9dbdf"/><rect width="100" height="34" fill="#e3e6ea"/>
<path d="M30 0h44l-2 7H34z" fill="#1b3a7c"/><path d="M54 6h40v24H54z" fill="#6b90b8"/><path d="M60 6v24M70 6v24M80 6v24M90 6v24" stroke="#c8d4e0" stroke-width="1.600"/><path d="M66 27h32v8H66z" fill="#3c4250"/><path d="M68 28v7M72 28v7M76 28v7M80 28v7M84 28v7M88 28v7M92 28v7" stroke="#c4c8d0" stroke-width="1"/>
<path d="M12 30c4-6 12-8 18-6 6-2 12 0 16 4-2 6-10 8-18 8s-14-2-16-6z" fill="#2c5a34"/><path d="M20 36h22v5H20z" fill="#4a70b0" opacity=".7"/>
<ellipse cx="52" cy="80" rx="38" ry="22" fill="#f7cf12"/><ellipse cx="52" cy="82" rx="30" ry="16" fill="#f9d826"/>
<path d="M14 40c4 10 10 20 20 28" stroke="#f6de5a" stroke-width="1.500" fill="none" opacity=".8"/>
<path d="M30 50c-2-4 2-8 6-6l4 6zM72 46c4-4 10-2 8 4l-6 6z" fill="#fbd012"/>
<ellipse cx="53" cy="49" rx="19" ry="18" fill="#fdd618"/><ellipse cx="50" cy="64" rx="14" ry="8" fill="#fbd214"/>
<path d="M48 26c2-5 8-6 11-2 4-1 6 3 4 6-4 2-12 2-15-4z" fill="#fb7a20"/>
<path d="M52 50l9 1-4 6z" fill="#fb8a1c"/><circle cx="46" cy="48" r="1.700" fill="#1d1a14"/><circle cx="66" cy="47" r="1.700" fill="#1d1a14"/><ellipse cx="44" cy="53" rx="3" ry="2" fill="#f8a08a" opacity=".8"/><ellipse cx="68" cy="52" rx="3" ry="2" fill="#f8a08a" opacity=".8"/>
<path d="M46 66q6 4 12 0" stroke="#f39a18" stroke-width="2" fill="none"/></g></svg></div><div class="lbl"><svg><use href="#micoff"/></svg><span class="d">19-</span>陈瑾</div></div>
<div class="tile" style="left:791px;top:222px;width:197px;height:111px"><div class="av"><svg width="55" height="55" viewBox="0 0 100 100" style="display:block"><defs><filter id="avb7" x="-5%" y="-5%" width="110%" height="110%"><feGaussianBlur stdDeviation="1.3"/></filter></defs><defs><filter id="lf_7" x="0" y="0" width="100%" height="100%"><feTurbulence type="fractalNoise" baseFrequency="0.12 0.3" numOctaves="3" seed="3"/><feColorMatrix type="matrix" values="0 0 0 0 0.35  0 0 0 0 0.35  0 0 0 0 0.36  0 0 0 -2.400 1.200"/></filter><filter id="lg_7" x="0" y="0" width="100%" height="100%"><feTurbulence type="fractalNoise" baseFrequency="0.14 0.3" numOctaves="3" seed="8"/><feColorMatrix type="matrix" values="0 0 0 0 0.5  0 0 0 0 0.5  0 0 0 0 0.54  0 0 0 -2.600 1.100"/></filter></defs><rect width="100" height="100" fill="#777"/><g filter="url(#avb7)">
<rect width="49" height="100" fill="#d9d9d9"/><rect x="49" width="51" height="100" fill="#161619"/>
<path d="M49 14c-14 2-24 14-26 32 0 12 4 22 10 32 4 8 10 12 16 14z" fill="#ececec"/><path d="M0 20c6-10 14-16 24-18-8 14-12 30-12 48 0 16 6 32 16 44-12-4-22-14-28-28z" fill="#c4c4c4"/>
<rect width="49" height="100" filter="url(#lf_7)" opacity=".55"/><rect x="49" width="51" height="100" filter="url(#lg_7)" opacity=".13"/>
<path d="M49 18c10 2 18 12 20 26 0 10-2 20-8 30-4 8-8 12-12 14z" fill="#242428"/>
<path d="M22 34q7-4 13 1-7 3-13-1z" fill="#f4f4f4"/><ellipse cx="29" cy="35" rx="3.200" ry="2.400" fill="#a2522a"/><ellipse cx="67" cy="35" rx="3.200" ry="2.200" fill="#3a8ac8"/>
<path d="M36 60c4-3 9-3 13-2v10c-5 0-10-3-13-8z" fill="#3a3a3c"/><path d="M49 58c4-1 8 0 11 3-2 5-6 7-11 7z" fill="#0a0a0c"/>
<path d="M36 86c5-1 9-3 13-7v5c-4 3-8 4-13 2z" fill="#4a4a4c"/><path d="M26 40c2 2 6 4 10 4" stroke="#bdbdbd" stroke-width="1.500" fill="none"/></g></svg></div><div class="lbl"><svg><use href="#micoff"/></svg><span class="d">9-</span>王淳</div></div>
<div class="tile" style="left:0px;top:334px;width:197px;height:110px"><svg class="vid" width="197" height="110" viewBox="0 0 197 111" preserveAspectRatio="none">
<defs>
<linearGradient id="sky4" x1="0" y1="0" x2="0" y2="1"><stop offset="0" stop-color="#46a6ea"/><stop offset="0.35" stop-color="#66bdea"/><stop offset="0.7" stop-color="#9ad6ec"/><stop offset="1" stop-color="#d4eef4"/></linearGradient>
<linearGradient id="skyr4" x1="0" y1="0" x2="1" y2="0"><stop offset="0" stop-color="#fff" stop-opacity="0"/><stop offset="0.55" stop-color="#e4f4fb" stop-opacity=".18"/><stop offset="1" stop-color="#e4f4fb" stop-opacity=".5"/></linearGradient>
<linearGradient id="seaR4" x1="0" y1="0" x2="0" y2="1"><stop offset="0" stop-color="#b4dcec"/><stop offset="0.08" stop-color="#6aaed8"/><stop offset="0.25" stop-color="#2f7fc0"/><stop offset="0.55" stop-color="#155c9c"/><stop offset="1" stop-color="#0a3864"/></linearGradient>
<linearGradient id="seaL4" x1="0" y1="0" x2="0" y2="1"><stop offset="0" stop-color="#176683"/><stop offset="0.35" stop-color="#0c4a66"/><stop offset="1" stop-color="#08334a"/></linearGradient>
<linearGradient id="cty4" x1="0" y1="0" x2="0" y2="1"><stop offset="0" stop-color="#7f9bb6"/><stop offset="1" stop-color="#9fb0bc"/></linearGradient>
<filter id="b14" x="-10%" y="-10%" width="120%" height="120%"><feGaussianBlur stdDeviation="0.600"/></filter>
<filter id="b24" x="-10%" y="-10%" width="120%" height="120%"><feGaussianBlur stdDeviation="1.400"/></filter>
<filter id="b34" x="-20%" y="-20%" width="140%" height="140%"><feGaussianBlur stdDeviation="3"/></filter>
<radialGradient id="fg4" cx="0.5" cy="0.42" r="0.62"><stop offset="0" stop-color="#fff" stop-opacity=".22"/><stop offset="0.6" stop-color="#fff" stop-opacity="0"/><stop offset="1" stop-color="#3a1c10" stop-opacity=".38"/></radialGradient><filter id="bp4" x="-5%" y="-5%" width="110%" height="110%"><feGaussianBlur stdDeviation="0.450"/></filter>
<filter id="nz4" x="0" y="0" width="100%" height="100%"><feTurbulence type="fractalNoise" baseFrequency="0.3 0.38" numOctaves="2" seed="7"/><feColorMatrix type="matrix" values="0 0 0 0 0.08  0 0 0 0 0.09  0 0 0 0 0.1  0 0 0 -3.2 1.75"/></filter>
<filter id="nl4" x="0" y="0" width="100%" height="100%"><feTurbulence type="fractalNoise" baseFrequency="0.36 0.42" numOctaves="2" seed="23"/><feColorMatrix type="matrix" values="0 0 0 0 0.96  0 0 0 0 0.94  0 0 0 0 0.88  0 0 0 -3.6 1.55"/></filter>
<clipPath id="land4"><path d="M0 32h2v-2h3v-1h3v3h3v-2h3v4h4v-4h3v-2h4v6h3v-2h4v4h5v-3h4v4h5v-2h4v3h6v-3h4v3h8v-2h5v3h8v-2h5v3h8l6 2 24 13 2 3-18 4-14 10-6 18-10 6-14-4-24-10-30-6H0z"/></clipPath>
<clipPath id="bay4"><path d="M0 74h32l30 6 14 6 10 10 2 15H0z"/></clipPath>
</defs>
<rect width="197" height="46" fill="url(#sky4)"/><rect width="197" height="46" fill="url(#skyr4)"/>
<g filter="url(#b24)"><ellipse cx="158" cy="38.500" rx="14" ry="2.600" fill="#fff" opacity=".9"/><ellipse cx="128" cy="19" rx="24" ry="2.500" fill="#fff" opacity=".22"/><ellipse cx="24" cy="11" rx="22" ry="2" fill="#fff" opacity=".25"/><ellipse cx="180" cy="8" rx="20" ry="3" fill="#fff" opacity=".2"/></g>
<rect y="40" width="197" height="71" fill="url(#seaR4)"/>
<g filter="url(#b24)"><path d="M100 40c6-3 12-4 18-3 6 1 10 2 16 3v2h-34z" fill="#a9c4d6"/><path d="M108 38h14v3h-14z" fill="#e6eef2"/></g>
<g filter="url(#b14)">
<path d="M0 32h2v-2h3v-1h3v3h3v-2h3v4h4v-4h3v-2h4v6h3v-2h4v4h5v-3h4v4h5v-2h4v3h6v-3h4v3h8v-2h5v3h8v-2h5v3h8l6 2v8H0z" fill="url(#cty4)"/>
<path d="M1 33h2v11H1zM6 30h3v14H6zM11 33h2v11h-2zM21 29h3v16h-3zM25 32h2v12h-2zM31 34h3v10h-3z" fill="#5f7890" opacity=".8"/>
<path d="M0 42h94l14 6 16 6 2 3-18 2-14 8-34 8H0z" fill="#857b66"/>
<path d="M0 40h14v5H0zM12 43h22v16H12z" fill="#a59c84"/><path d="M0 45h12v14H0z" fill="#cfc8b6"/>
<path d="M44 40h40v17H44z" fill="#94968f"/><path d="M46 37h20v4H46z" fill="#8f969a"/><path d="M46 44h36v2.200H46zM46 49h36v2.200H46zM46 53.500h36v1.500H46z" fill="#5e6468"/><path d="M84 45h8v10h-8z" fill="#8f979c"/>
<path d="M2 48h28v1.800H2zM2 52.500h28v1.800H2z" fill="#6f6a5c"/><path d="M0 56h46v5H0z" fill="#4a4a38" opacity=".75"/>
<path d="M36 52h8v8h-8z" fill="#3f5a3a" opacity=".8"/><path d="M60 58h20v4H60z" fill="#5a7a4a" opacity=".7"/>
<path d="M0 61h36l1 3H0z" fill="#3a6cc8"/><path d="M0 64h37v4H0z" fill="#e8e8e6"/><path d="M36 60h10v5H36z" fill="#dfe4ea"/>
<path d="M58 63h15l-1 3H59z" fill="#3f74c4"/>
<path d="M0 68h34l30-2 18 2 8 6 4 10-6 4-10-8-20-6-30-4H0z" fill="#a07c4e"/>
<path d="M0 71h32v3.500H0z" fill="#8a7046"/><path d="M32 67h30v4H32z" fill="#c8a878"/>
</g>
<g clip-path="url(#land4)"><rect width="130" height="100" filter="url(#nz4)" opacity=".6"/><rect width="130" height="100" filter="url(#nl4)" opacity=".22"/></g>
<path d="M0 74h32l30 6 14 6 10 10 2 15H0z" fill="url(#seaL4)"/>
<g clip-path="url(#bay4)"><rect y="70" width="100" height="41" filter="url(#nz4)" opacity=".35"/></g>
<g filter="url(#b24)"><path d="M0 76h30l20 6-10 6-40 0z" fill="#2a86a0" opacity=".4"/><path d="M86 92l10-6 14-20 16-8 2 3-14 12-12 22-12 16h-8z" fill="#1d6fa6" opacity=".6"/></g>
<g filter="url(#b14)">
<path d="M74 70l12-4 12 2 10-6 14-4 4 2-14 6-10 10-8 12-8 2-6-8z" fill="#a89878"/>
<path d="M52 80l5-3 5 3-3 5-6-1zM55 90l7-3 4 5-5 4-6-2zM35 89l5-2 4 3-4 4zM63 99l6-2 4 5-7 3zM70 84l6-2 4 4-5 5zM44 101l5-2 3 4-5 3zM76 94l5-1 3 4-5 3zM28 98l4-2 3 3-4 3z" fill="#8f7c5c" opacity=".85"/>
<path d="M56 82l3-1 2 2-3 2zM59 92l4-1 2 2-4 2zM72 86l3-1 2 2-3 2z" fill="#c2b28e"/>
<path d="M138 43.600h59v2h-59z" fill="#cfdfea"/><path d="M138 45.600h59v1.200h-59z" fill="#7fa2bc"/>
<path d="M142 46v6M148 46v7M154 46v7M160 46v8M166 46v8M172 46v9M178 46v9M184 46v10M190 46v10M196 46v11" stroke="#b9cfde" stroke-width="1.300"/>
<path d="M148 53v6M160 54v7M172 55v8M184 56v9M196 57v9" stroke="#9cc4de" stroke-width="1.400" opacity=".45"/>
</g>
<text class="vt" x="98.100" y="13.100" font-size="10" text-anchor="middle" textLength="134.800" lengthAdjust="spacingAndGlyphs" fill="#fa1cdc" stroke="#fa1cdc" stroke-width="0.420">2023届英语笔译硕士论文答辩</text><text class="vt" x="98.600" y="29.600" font-size="10.400" text-anchor="middle" textLength="162.300" lengthAdjust="spacingAndGlyphs" fill="#fa1cdc" stroke="#fa1cdc" stroke-width="0.420">大连海洋大学外国语与国际教育学院</text>
<g filter="url(#bp4)">
<path d="M67 111c1-12 3-20 8-26 8-5 18-9 28-13l6-4h26l6 4c8 3 14 5 20 9 10 6 16 18 19 30z" fill="#8b8a86"/>
<path d="M106.500 69h27l3 42h-32z" fill="#4b6a78"/>
<path d="M113 58h16v14c-5 4-11 4-16 0z" fill="#d2aa98"/>
<path d="M96 111c-1-14 0-28 4-38l7-4c-1 14 0 28 4 42zM148 111c2-14 0-28-6-39l-8-3c2 14 2 28 0 42z" fill="#a9a8a3"/>
<path d="M67 111c1-12 3-20 8-26l8 4c-3 7-4 14-4 22z" fill="#74736f"/>
<path d="M95.500 50C92 26 103 11 122 11c18 0 28 13 25.500 37-1 8-4 14-8 18.500l-34-1c-5-3-9-8-10-15.500z" fill="#35251e"/>
<path d="M105 42c1-14 8-23.500 19-23.500s18 9 19 23c0 13-5 25-13 29.500-4 2-8 2-12-.5-8-5.500-13.500-16-13-28.500z" fill="#e0bcaa"/>
<path d="M105 42c1-14 8-23.500 19-23.500s18 9 19 23c0 13-5 25-13 29.500-4 2-8 2-12-.5-8-5.500-13.500-16-13-28.500z" fill="url(#fg4)"/>
<path d="M99 50c-2-22 8-35 24-35 13 0 21 8 23.500 22-5-9-12-14-19-15-6 2-12 6-16 12-2 4-3 9-3 15-2 6-4 6-9.500 1z" fill="#35251e"/>
<path d="M138 30c5 6 7 14 6 24l-3 9c2-12 1-23-3-33z" fill="#2a1c16"/>
</g>
<g filter="url(#b14)">
<path d="M109.500 37.500h11.500M125 37.500h12M121 37.500h4" stroke="#6a5a56" stroke-width="0.900"/>
<ellipse cx="115" cy="39.500" rx="3" ry="1.300" fill="#2a1a16"/><ellipse cx="131" cy="39.500" rx="3" ry="1.300" fill="#2a1a16"/>
<path d="M120 57.500q4 2.200 8.500 0-4 3.500-8.500 0z" fill="#b24a52" stroke="#b24a52" stroke-width="0.800"/>
<ellipse cx="125" cy="51" rx="3" ry="1.200" fill="#b48a78" opacity=".7"/>
<path d="M142.800 91.500l1.600 3.200 3.400.6-2.600 2.200.8 3.500-3.200-1.800-3.200 1.800.800-3.500-2.600-2.200 3.400-.6z" fill="#f2f2ee"/>
</g></svg><div class="lbl"><svg><use href="#micon"/></svg>李春姬</div></div>
<div class="tile" style="left:198px;top:334px;width:197px;height:110px"><div class="av"><svg width="55" height="55" viewBox="0 0 100 100" style="display:block"><defs><filter id="avb8" x="-5%" y="-5%" width="110%" height="110%"><feGaussianBlur stdDeviation="1.3"/></filter></defs><defs><filter id="bn_8" x="0" y="0" width="100%" height="100%"><feTurbulence type="fractalNoise" baseFrequency="0.25" numOctaves="2" seed="4"/><feColorMatrix type="matrix" values="0 0 0 0 0.35  0 0 0 0 0.2  0 0 0 0 0.08  0 0 0 -2.600 1.300"/></filter><clipPath id="bc_8"><path d="M10 30C10 14 22 6 34 6c6 0 10 2 14 4 0-6 8-8 12-4s2 10-2 12c4 6 4 14 2 22l8 6 4 40-10 14H26L8 70 2 50c0-10 4-18 8-20z"/></clipPath></defs><rect width="100" height="100" fill="#d0c8bc"/><g filter="url(#avb8)">
<rect width="100" height="100" fill="#33333a"/><path d="M52 22l46 10-6 56-40-10z" fill="#dfe6f0"/><path d="M56 26l40 9-2 14-38-8z" fill="#c4cedc"/><path d="M70 36h12v10H70zM72 52l14 4-2 26-14-4z" fill="#3a3c44"/><path d="M60 10h30v12H60z" fill="#4a3a28"/><path d="M76 12h4v30h-4z" fill="#c8a24c"/><path d="M66 78l26 8-8 14H66z" fill="#b8bcc4"/>
<circle cx="50" cy="9" r="7.500" fill="#b07c42"/><circle cx="16" cy="16" r="7" fill="#b07c42"/>
<ellipse cx="33" cy="31" rx="22" ry="22" fill="#bb8448"/><ellipse cx="32" cy="38" rx="9" ry="7" fill="#c99658"/><ellipse cx="32" cy="36" rx="3.500" ry="2.500" fill="#6a3c22"/><circle cx="24" cy="27" r="2" fill="#3a2414"/><circle cx="42" cy="27" r="2" fill="#3a2414"/>
<path d="M2 44c0-8 6-14 12-12 4 4 4 14 0 22-6 2-12-2-12-10z" fill="#b98246"/>
<path d="M6 56c10-10 44-14 58-4l6 14c2 8-2 16-6 20H14C6 78 2 66 6 56z" fill="#191c30"/>
<path d="M6 58c14-8 42-10 58-3l1 4c-16-6-44-4-60 4zM5 68c16-8 46-10 64-2v4c-18-7-46-6-64 3zM8 79c16-6 42-8 58-2l-2 4c-16-5-38-4-54 2z" fill="#e6d594"/>
<path d="M22 86c8-2 30-2 40 0l2 14H24z" fill="#b98246"/>
<g clip-path="url(#bc_8)"><rect width="100" height="100" filter="url(#bn_8)" opacity=".5"/></g></g></svg></div><div class="lbl"><svg><use href="#micoff"/></svg><span class="d">5-</span>孙荆鸿</div></div>
<div class="tile" style="left:396px;top:334px;width:196px;height:110px"><svg class="vid" width="196" height="110" viewBox="0 0 197 111" preserveAspectRatio="none">
<defs>
<linearGradient id="sky5" x1="0" y1="0" x2="0" y2="1"><stop offset="0" stop-color="#46a6ea"/><stop offset="0.35" stop-color="#66bdea"/><stop offset="0.7" stop-color="#9ad6ec"/><stop offset="1" stop-color="#d4eef4"/></linearGradient>
<linearGradient id="skyr5" x1="0" y1="0" x2="1" y2="0"><stop offset="0" stop-color="#fff" stop-opacity="0"/><stop offset="0.55" stop-color="#e4f4fb" stop-opacity=".18"/><stop offset="1" stop-color="#e4f4fb" stop-opacity=".5"/></linearGradient>
<linearGradient id="seaR5" x1="0" y1="0" x2="0" y2="1"><stop offset="0" stop-color="#b4dcec"/><stop offset="0.08" stop-color="#6aaed8"/><stop offset="0.25" stop-color="#2f7fc0"/><stop offset="0.55" stop-color="#155c9c"/><stop offset="1" stop-color="#0a3864"/></linearGradient>
<linearGradient id="seaL5" x1="0" y1="0" x2="0" y2="1"><stop offset="0" stop-color="#176683"/><stop offset="0.35" stop-color="#0c4a66"/><stop offset="1" stop-color="#08334a"/></linearGradient>
<linearGradient id="cty5" x1="0" y1="0" x2="0" y2="1"><stop offset="0" stop-color="#7f9bb6"/><stop offset="1" stop-color="#9fb0bc"/></linearGradient>
<filter id="b15" x="-10%" y="-10%" width="120%" height="120%"><feGaussianBlur stdDeviation="0.600"/></filter>
<filter id="b25" x="-10%" y="-10%" width="120%" height="120%"><feGaussianBlur stdDeviation="1.400"/></filter>
<filter id="b35" x="-20%" y="-20%" width="140%" height="140%"><feGaussianBlur stdDeviation="3"/></filter>
<radialGradient id="fg5" cx="0.5" cy="0.42" r="0.62"><stop offset="0" stop-color="#fff" stop-opacity=".22"/><stop offset="0.6" stop-color="#fff" stop-opacity="0"/><stop offset="1" stop-color="#3a1c10" stop-opacity=".38"/></radialGradient><filter id="bp5" x="-5%" y="-5%" width="110%" height="110%"><feGaussianBlur stdDeviation="0.450"/></filter>
<filter id="nz5" x="0" y="0" width="100%" height="100%"><feTurbulence type="fractalNoise" baseFrequency="0.3 0.38" numOctaves="2" seed="7"/><feColorMatrix type="matrix" values="0 0 0 0 0.08  0 0 0 0 0.09  0 0 0 0 0.1  0 0 0 -3.2 1.75"/></filter>
<filter id="nl5" x="0" y="0" width="100%" height="100%"><feTurbulence type="fractalNoise" baseFrequency="0.36 0.42" numOctaves="2" seed="23"/><feColorMatrix type="matrix" values="0 0 0 0 0.96  0 0 0 0 0.94  0 0 0 0 0.88  0 0 0 -3.6 1.55"/></filter>
<clipPath id="land5"><path d="M0 32h2v-2h3v-1h3v3h3v-2h3v4h4v-4h3v-2h4v6h3v-2h4v4h5v-3h4v4h5v-2h4v3h6v-3h4v3h8v-2h5v3h8v-2h5v3h8l6 2 24 13 2 3-18 4-14 10-6 18-10 6-14-4-24-10-30-6H0z"/></clipPath>
<clipPath id="bay5"><path d="M0 74h32l30 6 14 6 10 10 2 15H0z"/></clipPath>
</defs>
<rect width="197" height="46" fill="url(#sky5)"/><rect width="197" height="46" fill="url(#skyr5)"/>
<g filter="url(#b25)"><ellipse cx="158" cy="38.500" rx="14" ry="2.600" fill="#fff" opacity=".9"/><ellipse cx="128" cy="19" rx="24" ry="2.500" fill="#fff" opacity=".22"/><ellipse cx="24" cy="11" rx="22" ry="2" fill="#fff" opacity=".25"/><ellipse cx="180" cy="8" rx="20" ry="3" fill="#fff" opacity=".2"/></g>
<rect y="40" width="197" height="71" fill="url(#seaR5)"/>
<g filter="url(#b25)"><path d="M100 40c6-3 12-4 18-3 6 1 10 2 16 3v2h-34z" fill="#a9c4d6"/><path d="M108 38h14v3h-14z" fill="#e6eef2"/></g>
<g filter="url(#b15)">
<path d="M0 32h2v-2h3v-1h3v3h3v-2h3v4h4v-4h3v-2h4v6h3v-2h4v4h5v-3h4v4h5v-2h4v3h6v-3h4v3h8v-2h5v3h8v-2h5v3h8l6 2v8H0z" fill="url(#cty5)"/>
<path d="M1 33h2v11H1zM6 30h3v14H6zM11 33h2v11h-2zM21 29h3v16h-3zM25 32h2v12h-2zM31 34h3v10h-3z" fill="#5f7890" opacity=".8"/>
<path d="M0 42h94l14 6 16 6 2 3-18 2-14 8-34 8H0z" fill="#857b66"/>
<path d="M0 40h14v5H0zM12 43h22v16H12z" fill="#a59c84"/><path d="M0 45h12v14H0z" fill="#cfc8b6"/>
<path d="M44 40h40v17H44z" fill="#94968f"/><path d="M46 37h20v4H46z" fill="#8f969a"/><path d="M46 44h36v2.200H46zM46 49h36v2.200H46zM46 53.500h36v1.500H46z" fill="#5e6468"/><path d="M84 45h8v10h-8z" fill="#8f979c"/>
<path d="M2 48h28v1.800H2zM2 52.500h28v1.800H2z" fill="#6f6a5c"/><path d="M0 56h46v5H0z" fill="#4a4a38" opacity=".75"/>
<path d="M36 52h8v8h-8z" fill="#3f5a3a" opacity=".8"/><path d="M60 58h20v4H60z" fill="#5a7a4a" opacity=".7"/>
<path d="M0 61h36l1 3H0z" fill="#3a6cc8"/><path d="M0 64h37v4H0z" fill="#e8e8e6"/><path d="M36 60h10v5H36z" fill="#dfe4ea"/>
<path d="M58 63h15l-1 3H59z" fill="#3f74c4"/>
<path d="M0 68h34l30-2 18 2 8 6 4 10-6 4-10-8-20-6-30-4H0z" fill="#a07c4e"/>
<path d="M0 71h32v3.500H0z" fill="#8a7046"/><path d="M32 67h30v4H32z" fill="#c8a878"/>
</g>
<g clip-path="url(#land5)"><rect width="130" height="100" filter="url(#nz5)" opacity=".6"/><rect width="130" height="100" filter="url(#nl5)" opacity=".22"/></g>
<path d="M0 74h32l30 6 14 6 10 10 2 15H0z" fill="url(#seaL5)"/>
<g clip-path="url(#bay5)"><rect y="70" width="100" height="41" filter="url(#nz5)" opacity=".35"/></g>
<g filter="url(#b25)"><path d="M0 76h30l20 6-10 6-40 0z" fill="#2a86a0" opacity=".4"/><path d="M86 92l10-6 14-20 16-8 2 3-14 12-12 22-12 16h-8z" fill="#1d6fa6" opacity=".6"/></g>
<g filter="url(#b15)">
<path d="M74 70l12-4 12 2 10-6 14-4 4 2-14 6-10 10-8 12-8 2-6-8z" fill="#a89878"/>
<path d="M52 80l5-3 5 3-3 5-6-1zM55 90l7-3 4 5-5 4-6-2zM35 89l5-2 4 3-4 4zM63 99l6-2 4 5-7 3zM70 84l6-2 4 4-5 5zM44 101l5-2 3 4-5 3zM76 94l5-1 3 4-5 3zM28 98l4-2 3 3-4 3z" fill="#8f7c5c" opacity=".85"/>
<path d="M56 82l3-1 2 2-3 2zM59 92l4-1 2 2-4 2zM72 86l3-1 2 2-3 2z" fill="#c2b28e"/>
<path d="M138 43.600h59v2h-59z" fill="#cfdfea"/><path d="M138 45.600h59v1.200h-59z" fill="#7fa2bc"/>
<path d="M142 46v6M148 46v7M154 46v7M160 46v8M166 46v8M172 46v9M178 46v9M184 46v10M190 46v10M196 46v11" stroke="#b9cfde" stroke-width="1.300"/>
<path d="M148 53v6M160 54v7M172 55v8M184 56v9M196 57v9" stroke="#9cc4de" stroke-width="1.400" opacity=".45"/>
</g>
<text class="vt" x="98.100" y="13.100" font-size="10" text-anchor="middle" textLength="134.800" lengthAdjust="spacingAndGlyphs" fill="#fa1cdc" stroke="#fa1cdc" stroke-width="0.420">2023届英语笔译硕士论文答辩</text><text class="vt" x="98.600" y="29.600" font-size="10.400" text-anchor="middle" textLength="162.300" lengthAdjust="spacingAndGlyphs" fill="#fa1cdc" stroke="#fa1cdc" stroke-width="0.420">大连海洋大学外国语与国际教育学院</text>
<g filter="url(#bp5)">
<path d="M57.500 111c1-10 4-17 10-22 7-3 14-5 20-8l4-3h14l4 3c7 3 13 4 19 6 8 4 11.500 13 13 24z" fill="#b7c2d6"/>
<path d="M90 70h17v13c-5 5-12 5-17 0z" fill="#cfa58e"/>
<path d="M86 81l4-4 8.500 9 8.500-9 4.500 4-7 13-6-7-6 7z" fill="#cdd6e6"/>
<path d="M98.500 86v25" stroke="#9aa8c0" stroke-width="0.800"/>
<path d="M57.500 111c1-10 4-17 10-22l6 3c-4 5-5 12-5.500 19zM142 111c-1-10-4-17-9-21l-5 2c3 5 4 12 4.500 19z" fill="#9eabc2"/>
<path d="M84.500 58c-1-12 4-20.500 14-20.500s15 8 14 20.500c-1 11-5 22-14 23-8-1-13-12-14-23z" fill="#deb9a2"/>
<path d="M84.500 58c-1-12 4-20.500 14-20.500s15 8 14 20.500c-1 11-5 22-14 23-8-1-13-12-14-23z" fill="url(#fg5)"/>
<path d="M83.500 60c-2.500-15 4-23 14.500-23 10.500 0 17 7 14.500 22-1-7-3-11-6-13-5 1.500-12 1.500-17 .5-3 3-5 7-6 13.500z" fill="#1d1917"/>
</g>
<g filter="url(#b15)">
<path d="M87 55.500h9.500M100.500 55.500h9.500M96.500 55.500h4" stroke="#8a7a74" stroke-width="0.800"/>
<rect x="87" y="53.500" width="9.500" height="5" rx="2" fill="#fff" opacity=".18"/><rect x="100.500" y="53.500" width="9.500" height="5" rx="2" fill="#fff" opacity=".18"/>
<ellipse cx="91.800" cy="56.200" rx="2.400" ry="1.100" fill="#2a1c18"/><ellipse cx="105.200" cy="56.200" rx="2.400" ry="1.100" fill="#2a1c18"/>
<ellipse cx="98.500" cy="69.800" rx="3.800" ry="1.200" fill="#a8625c"/>
<ellipse cx="99" cy="65" rx="2.600" ry="1" fill="#b48a72" opacity=".7"/>
</g></svg><div class="lbl"><svg><use href="#micon"/></svg>陈宏俊</div></div>
<div class="tile" style="left:593px;top:334px;width:197px;height:110px"><div class="av"><svg width="55" height="55" viewBox="0 0 100 100" style="display:block"><defs><filter id="avb9" x="-5%" y="-5%" width="110%" height="110%"><feGaussianBlur stdDeviation="1.3"/></filter></defs><rect width="100" height="100" fill="#3a3440"/><g filter="url(#avb9)"><rect width="100" height="100" fill="#0b0a1c"/><rect y="0" width="100" height="36" fill="#0a0918"/>
<path d="M0 44c30-8 70-10 100-16v14L0 52z" fill="#1f1d50"/>
<path d="M0 42c30-4 50-4 70-6l30-8v6l-30 6c-20 2-40 2-70 6z" fill="#d9d2ff"/><path d="M72 30l26-4v8l-26 4z" fill="#4cc8f0"/>
<path d="M0 47h100v6H0z" fill="#c9c4f0"/><path d="M30 46h34v8H30z" fill="#8d88c0"/><path d="M70 44h30v10H70z" fill="#a7a4b8"/>
<rect y="53" width="100" height="47" fill="#8c7e52"/><path d="M0 53h100v8H0z" fill="#6e6448"/><path d="M0 70h40v30H0z" fill="#a89858" opacity=".7"/>
<path d="M30 100c-2-16 4-28 12-34l10-8h22l8 8c6 8 8 20 6 34z" fill="#131313"/>
<path d="M46 40c0-12 6-20 14-20s14 8 16 22c2 12 0 26-6 34-4 2-10 2-14-2-6-8-10-20-10-34z" fill="#5c3c22"/><path d="M58 22c6 0 12 8 14 20 0 12-2 24-6 32 0-16-2-36-8-52z" fill="#7a5230"/>
<path d="M30 90l4-8 4 2-2 10z" fill="#cfc8b0" opacity=".6"/></g></svg></div><div class="lbl"><svg><use href="#micoff"/></svg><span class="d">13-</span>李昭慧</div></div>
<div class="tile" style="left:791px;top:334px;width:197px;height:110px"><div class="av"><svg width="55" height="55" viewBox="0 0 100 100" style="display:block"><defs><filter id="avb10" x="-5%" y="-5%" width="110%" height="110%"><feGaussianBlur stdDeviation="1.3"/></filter></defs><rect width="100" height="100" fill="#7a5a40"/><g filter="url(#avb10)"><rect width="100" height="100" fill="#6e4526"/><path d="M20 0h70v30H20z" fill="#28381f"/><path d="M0 20l30 6 4 40L0 80z" fill="#8a5a30"/><path d="M2 30l26 6M0 42l28 6M2 54l26 6" stroke="#5c381c" stroke-width="2"/>
<path d="M84 24h16v40H84z" fill="#6a70b8"/><path d="M90 30h10v16H90z" fill="#8a8ad0"/>
<path d="M18 16c4-8 14-8 24-4 12 4 22 8 26 18 0 8-8 12-18 10-10-2-22-6-28-12-4-4-6-8-4-12z" fill="#e9a232"/><circle cx="56" cy="27" r="1.600" fill="#1c1410"/><circle cx="63" cy="27" r="1.600" fill="#1c1410"/>
<path d="M20 62c0-18 14-30 32-30 20 0 34 12 34 30 0 10-2 18-6 24l-6 14H30l-6-14c-2-6-4-14-4-24z" fill="#efe3d4"/>
<ellipse cx="16" cy="64" rx="13" ry="15" fill="#f0e4d4"/><ellipse cx="90" cy="58" rx="9" ry="14" fill="#efe2d2"/>
<path d="M22 50c4-2 8 0 10 4l2 18-6 2zM82 44c4 0 6 4 6 8l-2 14-6-2z" fill="#e8b23c"/>
<ellipse cx="54" cy="67" rx="2" ry="3" fill="#1c1614"/><ellipse cx="76" cy="65" rx="2" ry="3" fill="#1c1614"/>
<circle cx="46" cy="75" r="5" fill="#fff2a8"/><circle cx="46" cy="75" r="2.500" fill="#ffc24a"/>
<path d="M42 78l10 2-2 10-8-2z" fill="#f3e8e2"/><path d="M46 90c4-4 12-4 16 0v10H46z" fill="#4a3486"/></g></svg></div><div class="lbl"><svg><use href="#micoff"/></svg><span class="d">15-</span>马超然</div></div>
<div class="tile" style="left:0px;top:445px;width:197px;height:111px"><div class="av"><svg width="55" height="55" viewBox="0 0 100 100" style="display:block"><defs><filter id="avb11" x="-5%" y="-5%" width="110%" height="110%"><feGaussianBlur stdDeviation="1.3"/></filter></defs><defs><filter id="ln_11" x="0" y="0" width="100%" height="100%"><feTurbulence type="fractalNoise" baseFrequency="0.22" numOctaves="2" seed="9"/><feColorMatrix type="matrix" values="0 0 0 0 1  0 0 0 0 1  0 0 0 0 1  0 0 0 -2.400 1.150"/></filter></defs><rect width="100" height="100" fill="#b8ccd0"/><g filter="url(#avb11)">
<rect width="100" height="100" fill="#bcd8e6"/><rect x="30" width="70" height="100" filter="url(#ln_11)" opacity=".8"/>
<path d="M0 14c10-8 24-8 34 0 4 8 0 16-6 22 6 8 8 18 4 30-2 12-8 20-18 24L0 84z" fill="#66776b"/><path d="M0 30c8-4 18 0 22 8 2 10-2 22-10 28L0 60z" fill="#4e6056"/>
<path d="M30 10c6-4 14-2 18 4-6 4-14 4-18-4z" fill="#87988a"/><path d="M10 78c8-6 20-4 26 4-4 8-12 14-22 12z" fill="#6e8274"/>
<path d="M50 70c-14 0-24-10-28-26 8 2 14 2 20-2-2-6 0-12 4-18 4 6 6 12 6 18 2-6 8-12 14-16 2 8 0 16-4 22 6-2 12-6 18-12 0 14-8 26-18 32-4 2-8 2-12 2z" fill="#f39086"/>
<path d="M46 40c2-8 6-12 8-12 2 6 2 14-2 24-4-2-6-6-6-12zM30 48c8 2 14 8 18 16-8 0-14-6-18-16zM72 44c-6 2-12 8-16 18 8-2 14-8 16-18z" fill="#f9c5bc"/>
<path d="M42 70c2 6 0 12-4 18 6-2 10-8 12-16zM56 66c6 0 12 2 16 6-6 2-12 0-16-6z" fill="#f07e76"/>
<path d="M52 72c0 10-2 20-2 28" stroke="#4f6e4c" stroke-width="2.200" fill="none"/><path d="M52 84c6-2 10 0 14 4-6 2-10 0-14-4z" fill="#5f8a5a"/></g></svg></div><div class="lbl"><svg><use href="#micoff"/></svg><span class="d">18-</span>陈梦滢</div></div>
<div class="tile" style="left:198px;top:445px;width:197px;height:111px"><div class="av"><svg width="55" height="55" viewBox="0 0 100 100" style="display:block"><defs><filter id="avb12" x="-5%" y="-5%" width="110%" height="110%"><feGaussianBlur stdDeviation="1.3"/></filter></defs><rect width="100" height="100" fill="#f9bdb4"/><g filter="url(#avb12)"><rect width="100" height="100" fill="#f9bdb4"/><ellipse cx="50" cy="50" rx="25" ry="24" fill="#fbe6dc"/>
<path d="M20 46C16 20 40 6 56 10l-2-8 10 10c14 4 22 18 20 34l-8-2-6 10-6-16-10 10-8-14-10 14-6-10-6 12z" fill="#3a3d4a"/><circle cx="62" cy="56" r="4.500" fill="#4a2f2a"/><circle cx="34" cy="58" r="2" fill="#f4a6a0" opacity=".6"/>
<path d="M34 100V80c0-6 8-8 16-8s16 2 16 8v20z" fill="#2c2f3a"/><path d="M36 80h28v3H36zM35 87h30v3H35zM35 94h30v3H35z" fill="#f4f4f4"/></g></svg></div><div class="lbl"><svg><use href="#micoff"/></svg>英语笔译王辰</div></div>
<div class="tile" style="left:396px;top:445px;width:196px;height:111px"><div class="av"><svg width="55" height="55" viewBox="0 0 100 100" style="display:block"><defs><filter id="avb13" x="-5%" y="-5%" width="110%" height="110%"><feGaussianBlur stdDeviation="1.3"/></filter></defs><rect width="100" height="100" fill="#8e8c5e"/><g filter="url(#avb13)"><rect width="100" height="100" fill="#8c8a58"/><rect width="100" height="34" fill="#cfcba6"/><path d="M0 34h100v10H0z" fill="#a5a274"/><rect x="0" y="0" width="16" height="100" fill="#b3b088"/>
<path d="M24 100C14 64 18 12 52 8c30 0 36 36 34 92z" fill="#15100e"/>
<path d="M36 38c0-14 8-22 18-22s16 8 16 22c0 12-6 24-16 26-10 0-18-12-18-26z" fill="#f3d6c6"/>
<path d="M32 40c0-18 10-28 22-28 10 0 18 8 20 22-8-8-18-12-28-8-6 2-10 8-14 14z" fill="#15100e"/>
<path d="M46 100c0-20 6-32 22-36 16 0 26 14 28 36z" fill="#a0a0a6"/><path d="M56 70l14-4 8 34H60z" fill="#8c8c94"/>
<path d="M42 62l12 4-2 18-12-8z" fill="#f1d0bc"/><ellipse cx="52" cy="52" rx="4.500" ry="2.200" fill="#c23e3c"/>
<ellipse cx="46" cy="38" rx="3" ry="1.800" fill="#241612"/><ellipse cx="60" cy="38" rx="3" ry="1.800" fill="#241612"/><path d="M26 26h10v4H26z" fill="#e8e8f2"/></g></svg></div><div class="lbl"><svg><use href="#micoff"/></svg><span class="d">08</span>张威</div></div>
<div class="tile" style="left:593px;top:445px;width:197px;height:111px"><div class="av"><svg width="55" height="55" viewBox="0 0 100 100" style="display:block"><defs><filter id="avb14" x="-5%" y="-5%" width="110%" height="110%"><feGaussianBlur stdDeviation="1.3"/></filter></defs><rect width="100" height="100" fill="#9a8458"/><g filter="url(#avb14)"><rect width="100" height="100" fill="#a98c5c"/><rect width="100" height="26" fill="#4f9fe2"/><path d="M0 22h100v6H0z" fill="#a9cdea"/><rect y="28" width="100" height="16" fill="#caa668"/><rect y="44" width="100" height="56" fill="#9c7f4e"/>
<path d="M14 100c-6-30 2-74 32-76 28 2 34 44 30 76z" fill="#1a1310"/>
<path d="M32 44c0-12 6-20 16-20 8 0 14 8 14 20 0 10-6 20-14 22-10 0-16-10-16-22z" fill="#efc6a8"/>
<path d="M28 44c0-16 8-24 20-24 10 0 16 6 18 18-8-8-16-10-24-6-6 2-10 6-14 12z" fill="#1a1310"/>
<path d="M8 100c2-22 12-34 34-36 24 0 38 12 42 36z" fill="#3c3236"/>
<path d="M18 74h8v26h-8zM34 66h7v34h-7zM52 66h7v34h-7zM68 74h7v26h-7z" fill="#8e4e4a"/><path d="M10 80h74v4H10zM8 92h78v4H8z" fill="#7a8aa0"/><path d="M26 70h6v30h-6zM44 66h5v34h-5zM60 68h5v32h-5z" fill="#c8c8d0" opacity=".55"/>
<path d="M72 60c4-14 10-20 14-16 4 6 0 16-4 24l-10 6z" fill="#e9bc9c"/><path d="M40 50q8 7 16 0-8 3-16 0z" fill="#fff"/></g></svg></div><div class="lbl"><svg><use href="#micoff"/></svg><span class="d">06-</span>马晋圆</div></div>
<div class="tile" style="left:791px;top:445px;width:197px;height:111px"><div class="av"><svg width="55" height="55" viewBox="0 0 100 100" style="display:block"><defs><filter id="avb15" x="-5%" y="-5%" width="110%" height="110%"><feGaussianBlur stdDeviation="1.3"/></filter></defs><rect width="100" height="100" fill="#35508c"/><g filter="url(#avb15)"><rect width="100" height="100" fill="#3a568f"/><rect width="100" height="30" fill="#2b427a"/><rect y="78" width="100" height="22" fill="#22335f"/>
<path d="M4 84c-6-30 2-64 24-66 18 0 26 26 22 66z" fill="#9eb2dd"/><path d="M10 80c-4-24 4-52 18-54 12 2 18 26 16 54z" fill="#c9d6f0"/><path d="M20 44q8 16 2 34" stroke="#eef3ff" stroke-width="3.500" fill="none"/><path d="M34 30q6 10 4 24" stroke="#7f97c8" stroke-width="2" fill="none"/>
<circle cx="72" cy="32" r="5.500" fill="#efcbb2"/><path d="M65 31c0-9 14-9 14 0-4-3-9-3-14 0z" fill="#a64f28"/><path d="M64 38h16l2 22H62z" fill="#e9edf4"/><path d="M62 58h20l2 12H60z" fill="#1c2746"/><path d="M66 70l-2 12M78 70l4 12" stroke="#e8c8b0" stroke-width="2.500"/>
<circle cx="52" cy="84" r="12" fill="none" stroke="#121830" stroke-width="2.200"/><circle cx="88" cy="84" r="12" fill="none" stroke="#121830" stroke-width="2.200"/><path d="M52 84l12-20h18l6 20M64 64l10 20M58 58h10" stroke="#121830" stroke-width="2.200" fill="none"/><circle cx="54" cy="58" r="6.500" fill="#d5def2"/></g></svg></div><div class="lbl"><svg><use href="#micoff"/></svg>张宁光</div></div>
<div class="tile" style="left:198px;top:557px;width:197px;height:110px"><div class="av"><svg width="55" height="55" viewBox="0 0 100 100" style="display:block"><defs><filter id="avb16" x="-5%" y="-5%" width="110%" height="110%"><feGaussianBlur stdDeviation="1.3"/></filter></defs><rect width="100" height="100" fill="#c8a888"/><g filter="url(#avb16)"><rect width="100" height="100" fill="#caa062"/>
<rect width="16" height="100" fill="#ebe7da"/><rect x="4" y="30" width="9" height="26" fill="#1c1a18"/><path d="M78 0h22v40H78z" fill="#2a241c"/><path d="M82 30h18v50H82z" fill="#c9a23c"/><path d="M84 34h10v16H84z" fill="#8a94b0"/>
<path d="M18 60C12 30 24 6 50 4c22 0 34 16 30 44l-6 20H24z" fill="#2c1e16"/>
<path d="M30 40c0-16 8-26 22-28 12 0 22 10 22 26 0 16-6 32-18 38-8 2-16-2-20-10-4-8-6-16-6-26z" fill="#f6dfd2"/>
<path d="M28 44c-2-18 6-30 18-34-2 8-6 14-8 24-2 8-4 12-10 10zM54 10c12 0 22 8 24 24l-4 12c-2-14-8-26-20-36z" fill="#3a281c"/>
<path d="M0 100c2-14 10-24 24-28l14 4c6 6 14 8 22 4l6 20z" fill="#f2d8bf"/><path d="M0 84c4-8 10-12 18-14l-2 30H0z" fill="#e7dc9c"/>
<path d="M62 70c4-10 12-20 22-22 4 2 2 8-2 12 4 0 4 6 0 8 2 2 0 6-4 8l-10 12H58z" fill="#f5dcc8"/>
<path d="M42 96c4-8 12-10 20-8l-2 12H42z" fill="#f6f2e8"/>
<ellipse cx="52" cy="60" rx="6" ry="3.200" fill="#d96a5a"/><ellipse cx="44" cy="36" rx="4.500" ry="2.600" fill="#2a1c18"/><ellipse cx="66" cy="37" rx="4.200" ry="2.500" fill="#2a1c18"/>
<ellipse cx="40" cy="50" rx="6" ry="4" fill="#f4b4a4" opacity=".55"/><circle cx="24" cy="52" r="3" fill="#d8b04a"/></g></svg></div><div class="lbl"><svg><use href="#micoff"/></svg><span class="d">3-</span>薛诗茜</div></div>
<div class="tile" style="left:396px;top:557px;width:196px;height:110px"><div class="av"><svg width="55" height="55" viewBox="0 0 100 100" style="display:block"><defs><filter id="avb17" x="-5%" y="-5%" width="110%" height="110%"><feGaussianBlur stdDeviation="1.3"/></filter></defs><defs><linearGradient id="a5_17" x1="0" y1="0" x2="0" y2="1"><stop offset="0" stop-color="#cdd0d2"/><stop offset="0.12" stop-color="#9aa8b8"/><stop offset="0.3" stop-color="#62748e"/><stop offset="0.6" stop-color="#566880"/><stop offset="0.68" stop-color="#9aa2a8"/><stop offset="1" stop-color="#c9c9c4"/></linearGradient><filter id="sn_17" x="0" y="0" width="100%" height="100%"><feTurbulence type="fractalNoise" baseFrequency="0.16 0.2" numOctaves="3" seed="5"/><feColorMatrix type="matrix" values="0 0 0 0 0.92  0 0 0 0 0.94  0 0 0 0 0.96  0 0 0 -2.800 1.400"/></filter><filter id="sd_17" x="0" y="0" width="100%" height="100%"><feTurbulence type="fractalNoise" baseFrequency="0.18 0.14" numOctaves="3" seed="12"/><feColorMatrix type="matrix" values="0 0 0 0 0.15  0 0 0 0 0.2  0 0 0 0 0.3  0 0 0 -2.800 1.300"/></filter></defs><rect width="100" height="100" fill="#7f909e"/><g filter="url(#avb17)">
<rect width="100" height="100" fill="url(#a5_17)"/><rect x="80" y="20" width="20" height="50" fill="#3d5c92" opacity=".6"/>
<rect y="12" width="100" height="58" filter="url(#sn_17)" opacity=".55"/><rect y="12" width="100" height="60" filter="url(#sd_17)" opacity=".55"/>
<path d="M20 100c6-16 18-30 34-38 14 6 26 18 34 38z" fill="#cfcfca"/><path d="M50 66l-6 34h6l4-30z" fill="#8f9498" opacity=".8"/><path d="M0 60l20-6 14 10-10 12-24 6z" fill="#dfe3e6" opacity=".7"/></g></svg></div><div class="lbl"><svg><use href="#micoff"/></svg>徐畅<span class="d">5</span></div></div>
<div class="tile" style="left:593px;top:557px;width:197px;height:110px"><div class="av"><svg width="55" height="55" viewBox="0 0 100 100" style="display:block"><defs><filter id="avb18" x="-5%" y="-5%" width="110%" height="110%"><feGaussianBlur stdDeviation="1.3"/></filter></defs><defs><radialGradient id="a6_18" cx="0.5" cy="0.35" r="0.75"><stop offset="0" stop-color="#e6e6e6"/><stop offset="0.55" stop-color="#c4c4c4"/><stop offset="1" stop-color="#8c8c8c"/></radialGradient><filter id="ff_18" x="0" y="0" width="100%" height="100%"><feTurbulence type="fractalNoise" baseFrequency="0.2 0.06" numOctaves="2" seed="14"/><feColorMatrix type="matrix" values="0 0 0 0 0.3  0 0 0 0 0.3  0 0 0 0 0.3  0 0 0 -2.400 1.150"/></filter></defs><rect width="100" height="100" fill="#bcbcbc"/><g filter="url(#avb18)">
<rect width="100" height="100" fill="url(#a6_18)"/><rect width="100" height="100" filter="url(#ff_18)" opacity=".4"/>
<path d="M27 0h5l1 94h-6z" fill="#4f4f4f" opacity=".9"/><path d="M14 10h3l-2 84h-3zM19 20h2v60h-2z" fill="#6a6a6a" opacity=".85"/><path d="M65 0h3.500v90H65z" fill="#5a5a5a" opacity=".85"/><path d="M74 4h4v88h-4z" fill="#535353" opacity=".9"/><path d="M85 20h3l2 70h-4zM92 30h2.500v50H92z" fill="#6e6e6e" opacity=".8"/>
<path d="M38 10h2v70h-2zM44 20h1.500v56H44zM56 14h2v64h-2zM60 30h1.500v46H60z" fill="#9a9a9a" opacity=".8"/><path d="M6 30h2.500v50H6z" fill="#7a7a7a" opacity=".8"/>
<path d="M0 88c30-4 70-4 100 0v12H0z" fill="#8a8a8a"/><path d="M47 82c1-3 3-3 4 0l1 12h-6z" fill="#2e2e2e"/></g></svg></div><div class="lbl"><svg><use href="#micoff"/></svg><span class="d">2</span>号<span class="d">-</span>李航</div></div>
<div id="side" class="abs"><div class="abs" style="left:0;top:-1px;width:279px;height:735px">
 <div class="abs" style="left:0;top:1px;width:279px;height:22.500px;border-bottom:1px solid #e1e2e6"></div>
 <svg class="abs" style="left:4px;top:6.6px" width="11" height="10.5" viewBox="0 0 22 21"><circle cx="11" cy="5.6" r="4.8" fill="#8c8f94"/><path d="M0.8 20.4c.6-7.300 4.600-9.800 10.200-9.800s9.600 2.500 10.200 9.800z" fill="#8c8f94"/></svg>
 <div class="abs" style="left:17.600px;top:1px;line-height:21px;font-size:9.400px;color:#1f1f1f;white-space:nowrap">管理成员</div>
 <svg class="abs" style="left:229px;top:7px" width="10" height="10" viewBox="0 0 20 20"><path d="M9 1.500H4.500a3 3 0 0 0-3 3v11a3 3 0 0 0 3 3h11a3 3 0 0 0 3-3V11" fill="none" stroke="#7c8189" stroke-width="1.900"/><rect x="11.200" y="1.200" width="7.600" height="7.600" rx="1.500" fill="none" stroke="#7c8189" stroke-width="1.900"/></svg>
 <svg class="abs" style="left:244px;top:8px" width="9" height="8.500" viewBox="0 0 18 17"><path d="M1 0.800L17 16.200M17 0.800L1 16.200" stroke="#666a70" stroke-width="1.700"/></svg>
 <div class="abs" style="left:258px;top:1px;width:21px;height:22.500px;background:#eef0f5;border-left:1px solid #dcdfe6;border-bottom:1px solid #dcdfe6"></div>
 <svg class="abs" style="left:265px;top:9px" width="7" height="6.500" viewBox="0 0 14 13"><path d="M0 1h14M0 6.500h14M0 12h14" stroke="#9a9ea6" stroke-width="1.500"/></svg>
 <div class="abs" style="left:9px;top:29.500px;width:261px;height:23px;border:1px solid #d5d9e4;border-radius:2.500px"></div>
 <svg class="abs" style="left:16px;top:36px" width="11" height="11" viewBox="0 0 22 22"><circle cx="9.500" cy="9.500" r="7" fill="none" stroke="#6d727c" stroke-width="3"/><path d="M14.800 14.800L20 20" stroke="#6d727c" stroke-width="3.200" stroke-linecap="round"/></svg>
 <div class="abs" style="left:33px;top:30px;line-height:22px;font-size:9.100px;color:#b4b6ba;white-space:nowrap">搜索成员</div>
 <div class="abs" style="left:79px;top:26.500px;width:181px;height:26.500px;background:#2b2e33;border-radius:3.500px"></div>
 <svg class="abs" style="left:87.500px;top:34px;opacity:.62" width="9" height="11"><use href="#smicoff"/></svg>
 <div class="abs" style="left:104.500px;top:30.500px;width:1px;height:18px;background:#15171a"></div>
 <div class="abs" style="left:112px;top:27px;line-height:26px;font-size:9.100px;color:#f4f4f4;white-space:nowrap;word-spacing:-1.100px;letter-spacing:-0.080px">正在讲话: 郭艳玲; 李春姬;</div>
 <svg class="abs" style="left:216px;top:30px" width="42" height="20" viewBox="0 0 42 20"><defs><linearGradient id="lg1" x1="0" y1="0" x2="1" y2="1"><stop offset="0" stop-color="#5c5f64"/><stop offset="1" stop-color="#34373c"/></linearGradient></defs><path d="M1 10L10 1.500L16.500 8L10 16.500z" fill="url(#lg1)"/><path d="M10 12L18 4L21 7v9l-4 2z" fill="#4a4d52"/><path d="M21 8l5-4.500 6 6-6.500 6.500-4.500-4z" fill="#3c3f44"/><path d="M20.400 2v17" stroke="#5a5d62" stroke-width="0.800"/><path d="M26.500 9.500l5-4.500v2.600c4 .2 6.200 2.600 6.400 6.600-1.500-2.300-3.400-3.200-6.400-3.200v3z" fill="#a4a6aa"/></svg>
 <div class="abs" style="left:2px;top:61.500px;width:137.500px;height:25.500px;background:#006fff;border-radius:2px 0 0 2px;color:#fff;font-size:9.200px;line-height:25px;text-align:center">会议中(23)</div>
 <div class="abs" style="left:139.500px;top:61.500px;width:137px;height:25.500px;border:1px solid #ececec;border-left:none;color:#1f1f1f;font-size:9.200px;line-height:24px;text-align:center">未入会</div>
 <div class="abs" style="left:0;top:88px;width:279px;height:612px;overflow:hidden"><div style="position:absolute;left:0;top:-88px;width:279px;height:700px"><div class="row" style="top:88.70px"><div class="sa"><svg width="22" height="22" viewBox="0 0 100 100" style="display:block"><defs><filter id="avb19" x="-5%" y="-5%" width="110%" height="110%"><feGaussianBlur stdDeviation="0.8"/></filter></defs><defs><linearGradient id="a1_19" x1="0" y1="0" x2="1" y2="0.35"><stop offset="0" stop-color="#fbcc9f"/><stop offset="0.5" stop-color="#fdd9b8"/><stop offset="1" stop-color="#fbe2d2"/></linearGradient><linearGradient id="a1b_19" x1="0" y1="0" x2="0" y2="1"><stop offset="0.4" stop-color="#f4dcd8" stop-opacity="0"/><stop offset="1" stop-color="#e9dcdc" stop-opacity=".8"/></linearGradient><filter id="a1f_19" x="-20%" y="-20%" width="140%" height="140%"><feGaussianBlur stdDeviation="2.600"/></filter><filter id="a1g_19" x="-20%" y="-20%" width="140%" height="140%"><feGaussianBlur stdDeviation="0.900"/></filter></defs><rect width="100" height="100" fill="#fbd6b8"/><g filter="url(#avb19)">
<rect width="100" height="100" fill="url(#a1_19)"/><rect width="100" height="100" fill="url(#a1b_19)"/><rect x="82" y="0" width="11" height="100" fill="#ecd6cf" opacity=".8" filter="url(#a1g_19)"/>
<g filter="url(#a1f_19)"><path d="M14 100c2-18 6-30 14-38-6-6-8-16-4-26 4-10 16-12 22-6 4 4 4 10 2 16l2 8c6 2 10 6 14 12 4 10 8 20 8 34z" fill="#a9aeb6" opacity=".85"/><path d="M55 44c2-4 8-4 10 0l2 14c0 4-2 6-4 8l-8-4z" fill="#a9aeb6" opacity=".8"/></g>
<g filter="url(#a1g_19)"><path d="M0 41c10-4 22-4 31 0-10 0-20 2-31 6zM0 50c10-2 20 0 28 6-10-2-18-2-28 0zM0 32c8-4 14-4 20-2-8 2-14 4-20 8zM0 58c8 2 18 8 26 20-8-8-16-12-26-12zM0 24c4-2 8-4 12-4-4 2-8 6-12 8z" fill="#222c1a"/>
<path d="M44 100c2-6 6-12 10-16-2 6-2 10-2 16zM56 100c2-6 6-10 10-14-2 6-4 10-4 14zM32 100l4-8 4 8z" fill="#2a3320"/></g></g></svg></div><div class="nm" style="line-height:12.400px;top:3.800px"><span class="d">10-</span>程煦<br><span style="color:#8f9399">(主持人, 我)</span></div><svg class="abs" style="left:221px;top:10px" width="12" height="12" viewBox="0 0 12 12"><circle cx="6" cy="6" r="5" fill="none" stroke="#fb8a84" stroke-width="0.800"/><circle cx="6" cy="6" r="3.100" fill="#fb3a30"/></svg><svg class="abs" style="left:240px;top:10.200px" width="10" height="12"><use href="#smicoff"/></svg><svg class="abs" style="left:257px;top:12px" width="12" height="7.4"><use href="#scamoff"/></svg></div><div class="row" style="top:121.34px"><div class="sa"><svg width="22" height="22" viewBox="0 0 100 100" style="display:block"><defs><filter id="avb20" x="-5%" y="-5%" width="110%" height="110%"><feGaussianBlur stdDeviation="0.8"/></filter></defs><rect width="100" height="100" fill="#2d3a1e"/><g filter="url(#avb20)"><rect width="100" height="100" fill="#2d3a1e"/><rect x="28" y="0" width="44" height="40" fill="#8fb6e6"/><path d="M0 0h34v70H0z" fill="#1f2a14"/><path d="M66 0h34v70H66z" fill="#3a2a18"/><path d="M20 60h60v40H20z" fill="#8a7a4a"/><path d="M40 44h20v20H40z" fill="#c8c0a8"/><rect y="80" width="100" height="20" fill="#4a5a2a"/></g></svg></div><div class="nm">陈宏俊</div><svg class="abs" style="left:240px;top:10.200px" width="10" height="12"><use href="#smic"/></svg><svg class="abs" style="left:257px;top:12px" width="12" height="7.4"><use href="#scam"/></svg></div><div class="row" style="top:153.98px"><div class="sa"><svg width="22" height="22" viewBox="0 0 100 100" style="display:block"><defs><filter id="avb21" x="-5%" y="-5%" width="110%" height="110%"><feGaussianBlur stdDeviation="0.8"/></filter></defs><rect width="100" height="100" fill="#4f7a34"/><g filter="url(#avb21)"><rect width="100" height="100" fill="#4f7a34"/><rect width="100" height="34" fill="#b9c9d6"/><path d="M0 34c10-16 24-16 34 0 10-20 30-20 40 0 8-10 18-10 26 0v14H0z" fill="#2f4a26"/><rect y="48" width="100" height="52" fill="#5e8a3a"/><ellipse cx="50" cy="70" rx="14" ry="6" fill="#c84a4a"/><rect x="44" y="56" width="10" height="14" fill="#e8e0d8"/></g></svg></div><div class="nm">郭艳玲</div><svg class="abs" style="left:240px;top:10.200px" width="10" height="12"><use href="#smictalk"/></svg><svg class="abs" style="left:257px;top:12px" width="12" height="7.4"><use href="#scam"/></svg></div><div class="row" style="top:186.62px"><div class="sa"><svg width="22" height="22" viewBox="0 0 100 100" style="display:block"><defs><filter id="avb22" x="-5%" y="-5%" width="110%" height="110%"><feGaussianBlur stdDeviation="0.8"/></filter></defs><defs><linearGradient id="a7_22" x1="0" y1="0" x2="1" y2="1"><stop offset="0" stop-color="#e9f29a"/><stop offset="0.4" stop-color="#8cc43a"/><stop offset="1" stop-color="#2d6a1e"/></linearGradient></defs><rect width="100" height="100" fill="#6aa830"/><g filter="url(#avb22)"><rect width="100" height="100" fill="url(#a7_22)"/><path d="M0 60L100 20v10L0 74zM0 80L100 44v8L0 92z" fill="#f4f8c8" opacity=".6"/><path d="M0 100L100 70v30z" fill="#1f4a16"/></g></svg></div><div class="nm">李春姬</div><svg class="abs" style="left:240px;top:10.200px" width="10" height="12"><use href="#smic"/></svg><svg class="abs" style="left:257px;top:12px" width="12" height="7.4"><use href="#scam"/></svg></div><div class="row" style="top:219.26px"><div class="sa"><svg width="22" height="22" viewBox="0 0 100 100" style="display:block"><defs><filter id="avb23" x="-5%" y="-5%" width="110%" height="110%"><feGaussianBlur stdDeviation="0.8"/></filter></defs><rect width="100" height="100" fill="#2f4a30"/><g filter="url(#avb23)"><rect width="100" height="100" fill="#2f4a30"/><path d="M20 10c20-6 50 0 60 24-6 30-30 50-60 40C4 50 6 24 20 10z" fill="#3f6a3c"/><path d="M50 10v70M30 24l20 20M72 30L50 52" stroke="#6a9462" stroke-width="3"/><path d="M0 80h100v20H0z" fill="#1c2a1e"/></g></svg></div><div class="nm">李明秋</div><svg class="abs" style="left:240px;top:10.200px" width="10" height="12"><use href="#smicoff"/></svg><svg class="abs" style="left:257px;top:12px" width="12" height="7.4"><use href="#scam"/></svg></div><div class="row" style="top:251.90px"><div class="sa"><svg width="22" height="22" viewBox="0 0 100 100" style="display:block"><defs><filter id="avb24" x="-5%" y="-5%" width="110%" height="110%"><feGaussianBlur stdDeviation="0.8"/></filter></defs><rect width="100" height="100" fill="#050505"/><g filter="url(#avb24)"><rect width="100" height="100" fill="#050505"/><path d="M34 34h30v2H34z" fill="#4aa890"/><path d="M34 42h8v2h-8z" fill="#7a8a9a"/></g></svg></div><div class="nm">林雅琴</div><svg class="abs" style="left:240px;top:10.200px" width="10" height="12"><use href="#smicoff"/></svg><svg class="abs" style="left:257px;top:12px" width="12" height="7.4"><use href="#scam"/></svg></div><div class="row" style="top:284.54px"><div class="sa"><svg width="22" height="22" viewBox="0 0 100 100" style="display:block"><defs><filter id="avb25" x="-5%" y="-5%" width="110%" height="110%"><feGaussianBlur stdDeviation="0.8"/></filter></defs><rect width="100" height="100" fill="#5a4820"/><g filter="url(#avb25)"><rect width="100" height="100" fill="#3d2812"/>
<rect width="100" height="23" fill="#d5c68c"/><rect y="22" width="100" height="10" fill="#7a4c1e"/><rect y="32" width="100" height="6" fill="#5a3616"/>
<path d="M78 32h22v60H78z" fill="#8a5c26"/><path d="M76 52h10v20H76z" fill="#4f6e42"/><path d="M0 50h12v28H0z" fill="#a39c5c"/>
<path d="M22 9c2 14 36 16 38 0z" fill="#2f5a2c"/><path d="M26 12c4 8 26 9 30 0z" fill="#3f6e38"/><ellipse cx="41" cy="8" rx="17.500" ry="4.500" fill="#e85a3c"/>
<path d="M12 96c-4-26 2-52 14-60 8-6 32-8 42 0 12 10 16 36 10 60z" fill="#17100c"/>
<path d="M34 52c2-12 12-16 20-14 8 2 12 10 12 22 0 12-6 22-16 24-10 0-18-14-16-32z" fill="#f0c9aa"/>
<path d="M32 50c2-10 10-16 18-16 10 0 16 6 18 16-10-6-24-6-36 0z" fill="#17100c"/>
<ellipse cx="40" cy="62" rx="5" ry="3.500" fill="#f2a58e" opacity=".7"/><ellipse cx="60" cy="62" rx="5" ry="3.500" fill="#f2a58e" opacity=".7"/>
<ellipse cx="49" cy="69" rx="5" ry="2.600" fill="#d8432e"/><circle cx="42" cy="56" r="1.500" fill="#2a1a12"/><circle cx="57" cy="56" r="1.500" fill="#2a1a12"/>
<path d="M22 56c2-8 12-8 14 0l2 16-2 24H26c0-10-4-20-6-28z" fill="#efc5a4"/>
<path d="M40 92c6-4 16-4 22 0v8H40z" fill="#e9ecef"/><path d="M76 82l12 2-2 10-12-2z" fill="#d8d8d0"/></g></svg></div><div class="nm"><span class="d">04-</span>徐琳</div><svg class="abs" style="left:240px;top:10.200px" width="10" height="12"><use href="#smicoff"/></svg><svg class="abs" style="left:257px;top:12px" width="12" height="7.4"><use href="#scamoff"/></svg></div><div class="row" style="top:317.18px"><div class="sa"><svg width="22" height="22" viewBox="0 0 100 100" style="display:block"><defs><filter id="avb26" x="-5%" y="-5%" width="110%" height="110%"><feGaussianBlur stdDeviation="0.8"/></filter></defs><rect width="100" height="100" fill="#9a8458"/><g filter="url(#avb26)"><rect width="100" height="100" fill="#a98c5c"/><rect width="100" height="26" fill="#4f9fe2"/><path d="M0 22h100v6H0z" fill="#a9cdea"/><rect y="28" width="100" height="16" fill="#caa668"/><rect y="44" width="100" height="56" fill="#9c7f4e"/>
<path d="M14 100c-6-30 2-74 32-76 28 2 34 44 30 76z" fill="#1a1310"/>
<path d="M32 44c0-12 6-20 16-20 8 0 14 8 14 20 0 10-6 20-14 22-10 0-16-10-16-22z" fill="#efc6a8"/>
<path d="M28 44c0-16 8-24 20-24 10 0 16 6 18 18-8-8-16-10-24-6-6 2-10 6-14 12z" fill="#1a1310"/>
<path d="M8 100c2-22 12-34 34-36 24 0 38 12 42 36z" fill="#3c3236"/>
<path d="M18 74h8v26h-8zM34 66h7v34h-7zM52 66h7v34h-7zM68 74h7v26h-7z" fill="#8e4e4a"/><path d="M10 80h74v4H10zM8 92h78v4H8z" fill="#7a8aa0"/><path d="M26 70h6v30h-6zM44 66h5v34h-5zM60 68h5v32h-5z" fill="#c8c8d0" opacity=".55"/>
<path d="M72 60c4-14 10-20 14-16 4 6 0 16-4 24l-10 6z" fill="#e9bc9c"/><path d="M40 50q8 7 16 0-8 3-16 0z" fill="#fff"/></g></svg></div><div class="nm"><span class="d">06-</span>马晋圆</div><svg class="abs" style="left:240px;top:10.200px" width="10" height="12"><use href="#smicoff"/></svg><svg class="abs" style="left:257px;top:12px" width="12" height="7.4"><use href="#scamoff"/></svg></div><div class="row" style="top:349.82px"><div class="sa"><svg width="22" height="22" viewBox="0 0 100 100" style="display:block"><defs><filter id="avb27" x="-5%" y="-5%" width="110%" height="110%"><feGaussianBlur stdDeviation="0.8"/></filter></defs><rect width="100" height="100" fill="#8e8c5e"/><g filter="url(#avb27)"><rect width="100" height="100" fill="#8c8a58"/><rect width="100" height="34" fill="#cfcba6"/><path d="M0 34h100v10H0z" fill="#a5a274"/><rect x="0" y="0" width="16" height="100" fill="#b3b088"/>
<path d="M24 100C14 64 18 12 52 8c30 0 36 36 34 92z" fill="#15100e"/>
<path d="M36 38c0-14 8-22 18-22s16 8 16 22c0 12-6 24-16 26-10 0-18-12-18-26z" fill="#f3d6c6"/>
<path d="M32 40c0-18 10-28 22-28 10 0 18 8 20 22-8-8-18-12-28-8-6 2-10 8-14 14z" fill="#15100e"/>
<path d="M46 100c0-20 6-32 22-36 16 0 26 14 28 36z" fill="#a0a0a6"/><path d="M56 70l14-4 8 34H60z" fill="#8c8c94"/>
<path d="M42 62l12 4-2 18-12-8z" fill="#f1d0bc"/><ellipse cx="52" cy="52" rx="4.500" ry="2.200" fill="#c23e3c"/>
<ellipse cx="46" cy="38" rx="3" ry="1.800" fill="#241612"/><ellipse cx="60" cy="38" rx="3" ry="1.800" fill="#241612"/><path d="M26 26h10v4H26z" fill="#e8e8f2"/></g></svg></div><div class="nm"><span class="d">08</span>张威</div><svg class="abs" style="left:240px;top:10.200px" width="10" height="12"><use href="#smicoff"/></svg><svg class="abs" style="left:257px;top:12px" width="12" height="7.4"><use href="#scamoff"/></svg></div><div class="row" style="top:382.46px"><div class="sa"><svg width="22" height="22" viewBox="0 0 100 100" style="display:block"><defs><filter id="avb28" x="-5%" y="-5%" width="110%" height="110%"><feGaussianBlur stdDeviation="0.8"/></filter></defs><rect width="100" height="100" fill="#3a3440"/><g filter="url(#avb28)"><rect width="100" height="100" fill="#0b0a1c"/><rect y="0" width="100" height="36" fill="#0a0918"/>
<path d="M0 44c30-8 70-10 100-16v14L0 52z" fill="#1f1d50"/>
<path d="M0 42c30-4 50-4 70-6l30-8v6l-30 6c-20 2-40 2-70 6z" fill="#d9d2ff"/><path d="M72 30l26-4v8l-26 4z" fill="#4cc8f0"/>
<path d="M0 47h100v6H0z" fill="#c9c4f0"/><path d="M30 46h34v8H30z" fill="#8d88c0"/><path d="M70 44h30v10H70z" fill="#a7a4b8"/>
<rect y="53" width="100" height="47" fill="#8c7e52"/><path d="M0 53h100v8H0z" fill="#6e6448"/><path d="M0 70h40v30H0z" fill="#a89858" opacity=".7"/>
<path d="M30 100c-2-16 4-28 12-34l10-8h22l8 8c6 8 8 20 6 34z" fill="#131313"/>
<path d="M46 40c0-12 6-20 14-20s14 8 16 22c2 12 0 26-6 34-4 2-10 2-14-2-6-8-10-20-10-34z" fill="#5c3c22"/><path d="M58 22c6 0 12 8 14 20 0 12-2 24-6 32 0-16-2-36-8-52z" fill="#7a5230"/>
<path d="M30 90l4-8 4 2-2 10z" fill="#cfc8b0" opacity=".6"/></g></svg></div><div class="nm"><span class="d">13-</span>李昭慧</div><svg class="abs" style="left:240px;top:10.200px" width="10" height="12"><use href="#smicoff"/></svg><svg class="abs" style="left:257px;top:12px" width="12" height="7.4"><use href="#scamoff"/></svg></div><div class="row" style="top:415.10px"><div class="sa"><svg width="22" height="22" viewBox="0 0 100 100" style="display:block"><defs><filter id="avb29" x="-5%" y="-5%" width="110%" height="110%"><feGaussianBlur stdDeviation="0.8"/></filter></defs><rect width="100" height="100" fill="#7a5a40"/><g filter="url(#avb29)"><rect width="100" height="100" fill="#6e4526"/><path d="M20 0h70v30H20z" fill="#28381f"/><path d="M0 20l30 6 4 40L0 80z" fill="#8a5a30"/><path d="M2 30l26 6M0 42l28 6M2 54l26 6" stroke="#5c381c" stroke-width="2"/>
<path d="M84 24h16v40H84z" fill="#6a70b8"/><path d="M90 30h10v16H90z" fill="#8a8ad0"/>
<path d="M18 16c4-8 14-8 24-4 12 4 22 8 26 18 0 8-8 12-18 10-10-2-22-6-28-12-4-4-6-8-4-12z" fill="#e9a232"/><circle cx="56" cy="27" r="1.600" fill="#1c1410"/><circle cx="63" cy="27" r="1.600" fill="#1c1410"/>
<path d="M20 62c0-18 14-30 32-30 20 0 34 12 34 30 0 10-2 18-6 24l-6 14H30l-6-14c-2-6-4-14-4-24z" fill="#efe3d4"/>
<ellipse cx="16" cy="64" rx="13" ry="15" fill="#f0e4d4"/><ellipse cx="90" cy="58" rx="9" ry="14" fill="#efe2d2"/>
<path d="M22 50c4-2 8 0 10 4l2 18-6 2zM82 44c4 0 6 4 6 8l-2 14-6-2z" fill="#e8b23c"/>
<ellipse cx="54" cy="67" rx="2" ry="3" fill="#1c1614"/><ellipse cx="76" cy="65" rx="2" ry="3" fill="#1c1614"/>
<circle cx="46" cy="75" r="5" fill="#fff2a8"/><circle cx="46" cy="75" r="2.500" fill="#ffc24a"/>
<path d="M42 78l10 2-2 10-8-2z" fill="#f3e8e2"/><path d="M46 90c4-4 12-4 16 0v10H46z" fill="#4a3486"/></g></svg></div><div class="nm"><span class="d">15-</span>马超然</div><svg class="abs" style="left:240px;top:10.200px" width="10" height="12"><use href="#smicoff"/></svg><svg class="abs" style="left:257px;top:12px" width="12" height="7.4"><use href="#scamoff"/></svg></div><div class="row" style="top:447.74px"><div class="sa"><svg width="22" height="22" viewBox="0 0 100 100" style="display:block"><defs><filter id="avb30" x="-5%" y="-5%" width="110%" height="110%"><feGaussianBlur stdDeviation="0.8"/></filter></defs><rect width="100" height="100" fill="#cfc6b6"/><g filter="url(#avb30)"><rect width="100" height="100" fill="#d6d1c8"/>
<path d="M0 0h48L36 40 28 100H0z" fill="#dedad2"/><path d="M60 0h40v100H60z" fill="#e2d2bc"/><path d="M62 6c10-4 24 0 34 10l-4 14c-10-6-20-8-30-8z" fill="#efe6da"/>
<path d="M50 0h11l-2 30-6-2z" fill="#1e1c1b"/><path d="M70 28l30-4v14l-24 4z" fill="#23211f"/><path d="M84 36h16v8H88z" fill="#2a2624"/>
<path d="M14 20l20 6M12 34l22 6M10 48l22 6M12 62l18 4" stroke="#b8b4ac" stroke-width="1.200" opacity=".7"/>
<path d="M38 60c-4 12-4 26 2 36h40c8-8 8-22 2-34-8-10-34-12-44-2z" fill="#e6cfae"/>
<path d="M34 36c0-12 8-20 18-20s16 8 16 18c0 8-2 14-4 20-4 10-12 14-20 12-8-2-12-12-10-30z" fill="#ecd5b4"/>
<ellipse cx="40" cy="62" rx="9" ry="10" fill="#efd9ba"/>
<path d="M32 34c0-8 6-14 12-12 2 6 0 14-4 18-4 2-8 0-8-6z" fill="#7c3b22"/>
<path d="M60 28c10-2 22 6 28 20-2 4-6 6-10 2-6-8-14-12-20-14z" fill="#8a4426"/>
<ellipse cx="39" cy="62" rx="4.500" ry="5.500" fill="#0f0d0c"/><ellipse cx="47.500" cy="41" rx="2.400" ry="3" fill="#2a2f52"/><ellipse cx="47" cy="40" rx="4" ry="4.500" fill="#fff" opacity=".5"/>
<ellipse cx="36" cy="88" rx="9" ry="7" fill="#f0ddc2"/><ellipse cx="52" cy="82" rx="8" ry="8" fill="#edd8b8"/>
<path d="M30 96c12-4 30-4 44-2l-2 6H34z" fill="#1d1b1a"/></g></svg></div><div class="nm"><span class="d">16-</span>冯志鑫</div><svg class="abs" style="left:240px;top:10.200px" width="10" height="12"><use href="#smicoff"/></svg><svg class="abs" style="left:257px;top:12px" width="12" height="7.4"><use href="#scamoff"/></svg></div><div class="row" style="top:480.38px"><div class="sa"><svg width="22" height="22" viewBox="0 0 100 100" style="display:block"><defs><filter id="avb31" x="-5%" y="-5%" width="110%" height="110%"><feGaussianBlur stdDeviation="0.8"/></filter></defs><defs><filter id="ln_31" x="0" y="0" width="100%" height="100%"><feTurbulence type="fractalNoise" baseFrequency="0.22" numOctaves="2" seed="9"/><feColorMatrix type="matrix" values="0 0 0 0 1  0 0 0 0 1  0 0 0 0 1  0 0 0 -2.400 1.150"/></filter></defs><rect width="100" height="100" fill="#b8ccd0"/><g filter="url(#avb31)">
<rect width="100" height="100" fill="#bcd8e6"/><rect x="30" width="70" height="100" filter="url(#ln_31)" opacity=".8"/>
<path d="M0 14c10-8 24-8 34 0 4 8 0 16-6 22 6 8 8 18 4 30-2 12-8 20-18 24L0 84z" fill="#66776b"/><path d="M0 30c8-4 18 0 22 8 2 10-2 22-10 28L0 60z" fill="#4e6056"/>
<path d="M30 10c6-4 14-2 18 4-6 4-14 4-18-4z" fill="#87988a"/><path d="M10 78c8-6 20-4 26 4-4 8-12 14-22 12z" fill="#6e8274"/>
<path d="M50 70c-14 0-24-10-28-26 8 2 14 2 20-2-2-6 0-12 4-18 4 6 6 12 6 18 2-6 8-12 14-16 2 8 0 16-4 22 6-2 12-6 18-12 0 14-8 26-18 32-4 2-8 2-12 2z" fill="#f39086"/>
<path d="M46 40c2-8 6-12 8-12 2 6 2 14-2 24-4-2-6-6-6-12zM30 48c8 2 14 8 18 16-8 0-14-6-18-16zM72 44c-6 2-12 8-16 18 8-2 14-8 16-18z" fill="#f9c5bc"/>
<path d="M42 70c2 6 0 12-4 18 6-2 10-8 12-16zM56 66c6 0 12 2 16 6-6 2-12 0-16-6z" fill="#f07e76"/>
<path d="M52 72c0 10-2 20-2 28" stroke="#4f6e4c" stroke-width="2.200" fill="none"/><path d="M52 84c6-2 10 0 14 4-6 2-10 0-14-4z" fill="#5f8a5a"/></g></svg></div><div class="nm"><span class="d">18-</span>陈梦滢</div><svg class="abs" style="left:240px;top:10.200px" width="10" height="12"><use href="#smicoff"/></svg><svg class="abs" style="left:257px;top:12px" width="12" height="7.4"><use href="#scamoff"/></svg></div><div class="row" style="top:513.02px"><div class="sa"><svg width="22" height="22" viewBox="0 0 100 100" style="display:block"><defs><filter id="avb32" x="-5%" y="-5%" width="110%" height="110%"><feGaussianBlur stdDeviation="0.8"/></filter></defs><rect width="100" height="100" fill="#e4e9ec"/><g filter="url(#avb32)"><rect width="100" height="100" fill="#d9dbdf"/><rect width="100" height="34" fill="#e3e6ea"/>
<path d="M30 0h44l-2 7H34z" fill="#1b3a7c"/><path d="M54 6h40v24H54z" fill="#6b90b8"/><path d="M60 6v24M70 6v24M80 6v24M90 6v24" stroke="#c8d4e0" stroke-width="1.600"/><path d="M66 27h32v8H66z" fill="#3c4250"/><path d="M68 28v7M72 28v7M76 28v7M80 28v7M84 28v7M88 28v7M92 28v7" stroke="#c4c8d0" stroke-width="1"/>
<path d="M12 30c4-6 12-8 18-6 6-2 12 0 16 4-2 6-10 8-18 8s-14-2-16-6z" fill="#2c5a34"/><path d="M20 36h22v5H20z" fill="#4a70b0" opacity=".7"/>
<ellipse cx="52" cy="80" rx="38" ry="22" fill="#f7cf12"/><ellipse cx="52" cy="82" rx="30" ry="16" fill="#f9d826"/>
<path d="M14 40c4 10 10 20 20 28" stroke="#f6de5a" stroke-width="1.500" fill="none" opacity=".8"/>
<path d="M30 50c-2-4 2-8 6-6l4 6zM72 46c4-4 10-2 8 4l-6 6z" fill="#fbd012"/>
<ellipse cx="53" cy="49" rx="19" ry="18" fill="#fdd618"/><ellipse cx="50" cy="64" rx="14" ry="8" fill="#fbd214"/>
<path d="M48 26c2-5 8-6 11-2 4-1 6 3 4 6-4 2-12 2-15-4z" fill="#fb7a20"/>
<path d="M52 50l9 1-4 6z" fill="#fb8a1c"/><circle cx="46" cy="48" r="1.700" fill="#1d1a14"/><circle cx="66" cy="47" r="1.700" fill="#1d1a14"/><ellipse cx="44" cy="53" rx="3" ry="2" fill="#f8a08a" opacity=".8"/><ellipse cx="68" cy="52" rx="3" ry="2" fill="#f8a08a" opacity=".8"/>
<path d="M46 66q6 4 12 0" stroke="#f39a18" stroke-width="2" fill="none"/></g></svg></div><div class="nm"><span class="d">19-</span>陈瑾</div><svg class="abs" style="left:240px;top:10.200px" width="10" height="12"><use href="#smicoff"/></svg><svg class="abs" style="left:257px;top:12px" width="12" height="7.4"><use href="#scamoff"/></svg></div><div class="row" style="top:545.66px"><div class="sa"><svg width="22" height="22" viewBox="0 0 100 100" style="display:block"><defs><filter id="avb33" x="-5%" y="-5%" width="110%" height="110%"><feGaussianBlur stdDeviation="0.8"/></filter></defs><defs><radialGradient id="a6_33" cx="0.5" cy="0.35" r="0.75"><stop offset="0" stop-color="#e6e6e6"/><stop offset="0.55" stop-color="#c4c4c4"/><stop offset="1" stop-color="#8c8c8c"/></radialGradient><filter id="ff_33" x="0" y="0" width="100%" height="100%"><feTurbulence type="fractalNoise" baseFrequency="0.2 0.06" numOctaves="2" seed="14"/><feColorMatrix type="matrix" values="0 0 0 0 0.3  0 0 0 0 0.3  0 0 0 0 0.3  0 0 0 -2.400 1.150"/></filter></defs><rect width="100" height="100" fill="#bcbcbc"/><g filter="url(#avb33)">
<rect width="100" height="100" fill="url(#a6_33)"/><rect width="100" height="100" filter="url(#ff_33)" opacity=".4"/>
<path d="M27 0h5l1 94h-6z" fill="#4f4f4f" opacity=".9"/><path d="M14 10h3l-2 84h-3zM19 20h2v60h-2z" fill="#6a6a6a" opacity=".85"/><path d="M65 0h3.500v90H65z" fill="#5a5a5a" opacity=".85"/><path d="M74 4h4v88h-4z" fill="#535353" opacity=".9"/><path d="M85 20h3l2 70h-4zM92 30h2.500v50H92z" fill="#6e6e6e" opacity=".8"/>
<path d="M38 10h2v70h-2zM44 20h1.500v56H44zM56 14h2v64h-2zM60 30h1.500v46H60z" fill="#9a9a9a" opacity=".8"/><path d="M6 30h2.500v50H6z" fill="#7a7a7a" opacity=".8"/>
<path d="M0 88c30-4 70-4 100 0v12H0z" fill="#8a8a8a"/><path d="M47 82c1-3 3-3 4 0l1 12h-6z" fill="#2e2e2e"/></g></svg></div><div class="nm"><span class="d">2</span>号<span class="d">-</span>李航</div><svg class="abs" style="left:240px;top:10.200px" width="10" height="12"><use href="#smicoff"/></svg><svg class="abs" style="left:257px;top:12px" width="12" height="7.4"><use href="#scamoff"/></svg></div><div class="row" style="top:578.30px"><div class="sa"><svg width="22" height="22" viewBox="0 0 100 100" style="display:block"><defs><filter id="avb34" x="-5%" y="-5%" width="110%" height="110%"><feGaussianBlur stdDeviation="0.8"/></filter></defs><rect width="100" height="100" fill="#c8a888"/><g filter="url(#avb34)"><rect width="100" height="100" fill="#caa062"/>
<rect width="16" height="100" fill="#ebe7da"/><rect x="4" y="30" width="9" height="26" fill="#1c1a18"/><path d="M78 0h22v40H78z" fill="#2a241c"/><path d="M82 30h18v50H82z" fill="#c9a23c"/><path d="M84 34h10v16H84z" fill="#8a94b0"/>
<path d="M18 60C12 30 24 6 50 4c22 0 34 16 30 44l-6 20H24z" fill="#2c1e16"/>
<path d="M30 40c0-16 8-26 22-28 12 0 22 10 22 26 0 16-6 32-18 38-8 2-16-2-20-10-4-8-6-16-6-26z" fill="#f6dfd2"/>
<path d="M28 44c-2-18 6-30 18-34-2 8-6 14-8 24-2 8-4 12-10 10zM54 10c12 0 22 8 24 24l-4 12c-2-14-8-26-20-36z" fill="#3a281c"/>
<path d="M0 100c2-14 10-24 24-28l14 4c6 6 14 8 22 4l6 20z" fill="#f2d8bf"/><path d="M0 84c4-8 10-12 18-14l-2 30H0z" fill="#e7dc9c"/>
<path d="M62 70c4-10 12-20 22-22 4 2 2 8-2 12 4 0 4 6 0 8 2 2 0 6-4 8l-10 12H58z" fill="#f5dcc8"/>
<path d="M42 96c4-8 12-10 20-8l-2 12H42z" fill="#f6f2e8"/>
<ellipse cx="52" cy="60" rx="6" ry="3.200" fill="#d96a5a"/><ellipse cx="44" cy="36" rx="4.500" ry="2.600" fill="#2a1c18"/><ellipse cx="66" cy="37" rx="4.200" ry="2.500" fill="#2a1c18"/>
<ellipse cx="40" cy="50" rx="6" ry="4" fill="#f4b4a4" opacity=".55"/><circle cx="24" cy="52" r="3" fill="#d8b04a"/></g></svg></div><div class="nm"><span class="d">3-</span>薛诗茜</div><svg class="abs" style="left:240px;top:10.200px" width="10" height="12"><use href="#smicoff"/></svg><svg class="abs" style="left:257px;top:12px" width="12" height="7.4"><use href="#scamoff"/></svg></div><div class="row" style="top:610.94px"><div class="sa"><svg width="22" height="22" viewBox="0 0 100 100" style="display:block"><defs><filter id="avb35" x="-5%" y="-5%" width="110%" height="110%"><feGaussianBlur stdDeviation="0.8"/></filter></defs><defs><filter id="bn_35" x="0" y="0" width="100%" height="100%"><feTurbulence type="fractalNoise" baseFrequency="0.25" numOctaves="2" seed="4"/><feColorMatrix type="matrix" values="0 0 0 0 0.35  0 0 0 0 0.2  0 0 0 0 0.08  0 0 0 -2.600 1.300"/></filter><clipPath id="bc_35"><path d="M10 30C10 14 22 6 34 6c6 0 10 2 14 4 0-6 8-8 12-4s2 10-2 12c4 6 4 14 2 22l8 6 4 40-10 14H26L8 70 2 50c0-10 4-18 8-20z"/></clipPath></defs><rect width="100" height="100" fill="#d0c8bc"/><g filter="url(#avb35)">
<rect width="100" height="100" fill="#33333a"/><path d="M52 22l46 10-6 56-40-10z" fill="#dfe6f0"/><path d="M56 26l40 9-2 14-38-8z" fill="#c4cedc"/><path d="M70 36h12v10H70zM72 52l14 4-2 26-14-4z" fill="#3a3c44"/><path d="M60 10h30v12H60z" fill="#4a3a28"/><path d="M76 12h4v30h-4z" fill="#c8a24c"/><path d="M66 78l26 8-8 14H66z" fill="#b8bcc4"/>
<circle cx="50" cy="9" r="7.500" fill="#b07c42"/><circle cx="16" cy="16" r="7" fill="#b07c42"/>
<ellipse cx="33" cy="31" rx="22" ry="22" fill="#bb8448"/><ellipse cx="32" cy="38" rx="9" ry="7" fill="#c99658"/><ellipse cx="32" cy="36" rx="3.500" ry="2.500" fill="#6a3c22"/><circle cx="24" cy="27" r="2" fill="#3a2414"/><circle cx="42" cy="27" r="2" fill="#3a2414"/>
<path d="M2 44c0-8 6-14 12-12 4 4 4 14 0 22-6 2-12-2-12-10z" fill="#b98246"/>
<path d="M6 56c10-10 44-14 58-4l6 14c2 8-2 16-6 20H14C6 78 2 66 6 56z" fill="#191c30"/>
<path d="M6 58c14-8 42-10 58-3l1 4c-16-6-44-4-60 4zM5 68c16-8 46-10 64-2v4c-18-7-46-6-64 3zM8 79c16-6 42-8 58-2l-2 4c-16-5-38-4-54 2z" fill="#e6d594"/>
<path d="M22 86c8-2 30-2 40 0l2 14H24z" fill="#b98246"/>
<g clip-path="url(#bc_35)"><rect width="100" height="100" filter="url(#bn_35)" opacity=".5"/></g></g></svg></div><div class="nm"><span class="d">5-</span>孙荆鸿</div><svg class="abs" style="left:240px;top:10.200px" width="10" height="12"><use href="#smicoff"/></svg><svg class="abs" style="left:257px;top:12px" width="12" height="7.4"><use href="#scamoff"/></svg></div><div class="row" style="top:643.58px"><div class="sa"><svg width="22" height="22" viewBox="0 0 100 100" style="display:block"><defs><filter id="avb36" x="-5%" y="-5%" width="110%" height="110%"><feGaussianBlur stdDeviation="0.8"/></filter></defs><defs><filter id="lf_36" x="0" y="0" width="100%" height="100%"><feTurbulence type="fractalNoise" baseFrequency="0.12 0.3" numOctaves="3" seed="3"/><feColorMatrix type="matrix" values="0 0 0 0 0.35  0 0 0 0 0.35  0 0 0 0 0.36  0 0 0 -2.400 1.200"/></filter><filter id="lg_36" x="0" y="0" width="100%" height="100%"><feTurbulence type="fractalNoise" baseFrequency="0.14 0.3" numOctaves="3" seed="8"/><feColorMatrix type="matrix" values="0 0 0 0 0.5  0 0 0 0 0.5  0 0 0 0 0.54  0 0 0 -2.600 1.100"/></filter></defs><rect width="100" height="100" fill="#777"/><g filter="url(#avb36)">
<rect width="49" height="100" fill="#d9d9d9"/><rect x="49" width="51" height="100" fill="#161619"/>
<path d="M49 14c-14 2-24 14-26 32 0 12 4 22 10 32 4 8 10 12 16 14z" fill="#ececec"/><path d="M0 20c6-10 14-16 24-18-8 14-12 30-12 48 0 16 6 32 16 44-12-4-22-14-28-28z" fill="#c4c4c4"/>
<rect width="49" height="100" filter="url(#lf_36)" opacity=".55"/><rect x="49" width="51" height="100" filter="url(#lg_36)" opacity=".13"/>
<path d="M49 18c10 2 18 12 20 26 0 10-2 20-8 30-4 8-8 12-12 14z" fill="#242428"/>
<path d="M22 34q7-4 13 1-7 3-13-1z" fill="#f4f4f4"/><ellipse cx="29" cy="35" rx="3.200" ry="2.400" fill="#a2522a"/><ellipse cx="67" cy="35" rx="3.200" ry="2.200" fill="#3a8ac8"/>
<path d="M36 60c4-3 9-3 13-2v10c-5 0-10-3-13-8z" fill="#3a3a3c"/><path d="M49 58c4-1 8 0 11 3-2 5-6 7-11 7z" fill="#0a0a0c"/>
<path d="M36 86c5-1 9-3 13-7v5c-4 3-8 4-13 2z" fill="#4a4a4c"/><path d="M26 40c2 2 6 4 10 4" stroke="#bdbdbd" stroke-width="1.500" fill="none"/></g></svg></div><div class="nm"><span class="d">9-</span>王淳</div><svg class="abs" style="left:240px;top:10.200px" width="10" height="12"><use href="#smicoff"/></svg><svg class="abs" style="left:257px;top:12px" width="12" height="7.4"><use href="#scamoff"/></svg></div><div class="row" style="top:676.22px"><div class="sa"><svg width="22" height="22" viewBox="0 0 100 100" style="display:block"><defs><filter id="avb37" x="-5%" y="-5%" width="110%" height="110%"><feGaussianBlur stdDeviation="0.8"/></filter></defs><rect width="100" height="100" fill="#f6dfe2"/><g filter="url(#avb37)"><rect width="100" height="100" fill="#fdf7f6"/>
<path d="M0 20C10 4 40-4 70 4c10 4 18 10 24 18-12-2-22 0-30 6-6 8-10 8-18 10-8 4-12 12-14 22l-4 40H0z" fill="#ecc9c8"/>
<path d="M4 40c4-10 10-14 16-14-4 20-6 44-4 74H4z" fill="#e6b4bc" opacity=".7"/>
<path d="M22 18c16-10 40-10 56 2-10 0-18 4-24 10-8 2-18 6-24 14-4-8-6-18-8-26z" fill="#f0d2cf"/>
<path d="M62 12c12 2 24 10 32 22-8-2-18-2-26 2z" fill="#efcfd0"/>
<ellipse cx="48" cy="58" rx="19" ry="19" fill="#fdf1ef"/>
<path d="M30 46c4-12 16-18 28-16-6 6-14 12-20 22zM58 30c6 2 10 8 12 16l-10-4z" fill="#ecc9c8"/>
<path d="M33 56q5-4 10 0M55 52q5-4 10 0" stroke="#e08a9a" stroke-width="2" fill="none"/>
<ellipse cx="36" cy="63" rx="4" ry="2.500" fill="#f8c8d0" opacity=".8"/>
<path d="M52 72c6-10 20-14 32-10l10-22 4 2-4 26c4 10 2 22-6 32H56c-6-8-8-18-4-28z" fill="#ffffff"/>
<circle cx="72" cy="75" r="2.500" fill="#c9647a"/><circle cx="83" cy="83" r="2.500" fill="#c9647a"/><ellipse cx="64" cy="80" rx="4" ry="3" fill="#fbd6dc"/>
<path d="M20 70l14 30H18z" fill="#f7dde2"/></g></svg></div><div class="nm">风晴雪</div><svg class="abs" style="left:240px;top:10.200px" width="10" height="12"><use href="#smicoff"/></svg><svg class="abs" style="left:257px;top:12px" width="12" height="7.4"><use href="#scamoff"/></svg></div></div></div>
 <div class="abs" style="left:0;top:699.500px;width:279px;height:1px;background:#e6e7ea"></div>
 <div class="btn" style="left:44px;width:54px">全体静音</div>
 <div class="btn" style="left:103.500px;width:65.500px">解除全体静音</div>
 <div class="btn" style="left:175px;width:60px;text-align:left;padding-left:5px">会议管控<svg class="abs" style="left:45.500px;top:9px" width="7" height="4" viewBox="0 0 7 4"><path d="M0 0h7L3.500 4z" fill="#555"/></svg></div>
</div></div>

<div id="task" class="abs">
 <div class="abs" style="left:16.200px;top:11px;width:15px;height:15px;border-radius:50%;background:radial-gradient(circle at 40% 35%,#ffb43a,#f98a12 70%,#f27a0a)"></div>
 <div class="abs" style="left:38px;top:7.500px;font-size:8.400px;line-height:10px;color:#1b1b1b;white-space:nowrap">5°C</div>
 <div class="abs" style="left:38px;top:19px;font-size:8.300px;line-height:10px;color:#5a5d64;white-space:nowrap">晴朗</div>
 <svg class="abs" style="left:454.800px;top:9.800px" width="17.600" height="17.600" viewBox="0 0 176 176"><defs><linearGradient id="wg" x1="0" y1="0" x2="1" y2="1"><stop offset="0" stop-color="#38c5f6"/><stop offset="1" stop-color="#0a7bd6"/></linearGradient></defs><rect x="0" y="0" width="83" height="83" rx="6" fill="url(#wg)"/><rect x="93" y="0" width="83" height="83" rx="6" fill="url(#wg)"/><rect x="0" y="93" width="83" height="83" rx="6" fill="url(#wg)"/><rect x="93" y="93" width="83" height="83" rx="6" fill="url(#wg)"/></svg>
 <div class="abs" style="left:484.200px;top:7.600px;width:72px;height:21.800px;border-radius:11px;background:#f7f3f8;box-shadow:0 0 0 .5px rgba(180,170,190,.35)"></div>
 <svg class="abs" style="left:504.500px;top:13.500px" width="10" height="10" viewBox="0 0 20 20"><circle cx="12" cy="8" r="6" fill="none" stroke="#222" stroke-width="2.200"/><path d="M7.500 12.500L2 18" stroke="#222" stroke-width="2.400" stroke-linecap="round"/></svg>
 <div class="abs" style="left:519px;top:7.600px;line-height:21.800px;font-size:8.700px;color:#1b1b1b;white-space:nowrap">搜索</div>
 <svg class="abs" style="left:566.300px;top:9.500px" width="18.400" height="18.400" viewBox="0 0 184 184"><defs><linearGradient id="tv" x1="0" y1="1" x2="1" y2="0"><stop offset="0" stop-color="#b9b9bb" stop-opacity=".92"/><stop offset="0.6" stop-color="#efeff0" stop-opacity=".95"/><stop offset="1" stop-color="#ffffff"/></linearGradient></defs><rect x="6" y="55" width="130" height="120" rx="12" fill="#262628"/><rect x="47" y="8" width="131" height="121" rx="12" fill="url(#tv)"/></svg>
 <svg class="abs" style="left:598.800px;top:9.200px" width="18.600" height="18.600" viewBox="0 0 186 186"><rect x="4" y="4" width="178" height="178" rx="34" fill="#1d2025"/><path d="M93 30l54 31-54 31-54-31z" fill="#c9ced6"/><path d="M39 61l54 31v62l-54-31z" fill="#8e949f"/><path d="M147 61v62l-54 31V92z" fill="#6f7682"/><path d="M93 92L60 73M93 92l33-19M93 92v40" stroke="#2f7df0" stroke-width="13" stroke-linecap="round"/><path d="M93 30l54 31v62l-54 31-54-31V61z" fill="none" stroke="#1d2025" stroke-width="4"/><path d="M66 46l54 31M120 46L66 77" stroke="#1d2025" stroke-width="3" opacity=".5"/></svg>
 <svg class="abs" style="left:631.800px;top:10.400px" width="18.200" height="16.600" viewBox="0 0 182 166"><defs><linearGradient id="fd" x1="0" y1="0" x2="0" y2="1"><stop offset="0" stop-color="#ffd966"/><stop offset="1" stop-color="#f7bd2a"/></linearGradient></defs><path d="M2 14q0-10 10-10h44l16 16h98q10 0 10 10v20H2z" fill="#e9a716"/><path d="M2 34h178v112q0 10-10 10H12q-10 0-10-10z" fill="url(#fd)"/><path d="M34 156v-36q0-12 12-12h90q12 0 12 12v36z" fill="#1b7ad8"/><rect x="56" y="122" width="70" height="11" rx="5" fill="#1458a8"/></svg>
 <svg class="abs" style="left:664px;top:9.200px" width="19.200" height="19.200" viewBox="0 0 192 192"><defs><linearGradient id="eg" x1="1" y1="0" x2="0" y2="1"><stop offset="0" stop-color="#7be04e"/><stop offset="0.26" stop-color="#41ca88"/><stop offset="0.48" stop-color="#1f9fe0"/><stop offset="1" stop-color="#0d55a8"/></linearGradient><linearGradient id="eg2" x1="0" y1="0" x2="1" y2="1"><stop offset="0" stop-color="#1a7fd0"/><stop offset="1" stop-color="#0a4a98"/></linearGradient></defs><circle cx="96" cy="96" r="90" fill="url(#eg)"/><path d="M34 132c0-30 20-54 46-56 14 0 24 8 26 20-2 10-4 16 0 24 8 14 30 18 56 10 8-2 14-6 20-10-10 38-44 64-84 64-36 0-64-22-64-52z" fill="url(#eg2)"/><path d="M104 100c10-8 30-8 50-2 16 4 30 4 40-2l4 14c-4 14-14 22-32 26-24 6-48 2-58-10-6-8-8-18-4-26z" fill="#eddbeb"/></svg>
 <svg class="abs" style="left:696.500px;top:11px" width="19.600" height="15" viewBox="0 0 196 150"><path d="M4 10h36l22 84 24-66h26l22 66 24-84h34l-40 132h-32l-22-62-22 62H44z" fill="#f2391c"/><path d="M4 10h36l10 40-30 10z" fill="#ff6a2a"/></svg>
 <svg class="abs" style="left:729.800px;top:9.600px" width="18" height="18" viewBox="0 0 180 180"><rect x="2" y="2" width="176" height="176" rx="40" fill="#ec1c24"/><text x="90" y="116" font-size="74" font-weight="700" text-anchor="middle" fill="#fff" textLength="140" lengthAdjust="spacingAndGlyphs" font-family="Liberation Sans, Noto Sans CJK SC, sans-serif">有道</text></svg>
 <svg class="abs" style="left:761px;top:10px" width="19.600" height="17.400" viewBox="0 0 196 174"><ellipse cx="76" cy="68" rx="70" ry="60" fill="#3fcf5a"/><path d="M34 112l-10 34 38-20z" fill="#3fcf5a"/><ellipse cx="134" cy="112" rx="56" ry="48" fill="#e9ecef"/><path d="M166 148l8 24-30-16z" fill="#e9ecef"/><circle cx="52" cy="52" r="8" fill="#1f7a30"/><circle cx="98" cy="52" r="8" fill="#1f7a30"/><circle cx="116" cy="100" r="6.500" fill="#8a9098"/><circle cx="152" cy="100" r="6.500" fill="#8a9098"/></svg>
 <div class="abs" style="left:791px;top:4.600px;width:27px;height:27px;border-radius:3px;background:rgba(255,255,255,.45);box-shadow:0 0 0 .5px rgba(200,190,205,.5),3px 0 0 -0.5px rgba(255,255,255,.3)"></div>
 <svg class="abs" style="left:795.800px;top:9.400px" width="17.400" height="17.400" viewBox="0 0 174 174"><defs><linearGradient id="tm" x1="0" y1="0" x2="0" y2="1"><stop offset="0" stop-color="#2f8cff"/><stop offset="1" stop-color="#0a5ee0"/></linearGradient></defs><rect x="2" y="2" width="170" height="170" rx="30" fill="url(#tm)"/><path d="M22 106l36-34 24 24-34 30z" fill="#fff"/><path d="M60 106l42-44 50 44-26 22-26-24-20 20z" fill="#fff"/><path d="M100 104l14-12 12 12-12 12z" fill="#1d6ff0"/></svg>
 <div class="abs" style="left:639.200px;top:31px;width:4.600px;height:2px;border-radius:1px;background:#7a747e"></div>
 <div class="abs" style="left:671.800px;top:31px;width:4.600px;height:2px;border-radius:1px;background:#7a747e"></div>
 <div class="abs" style="left:704.400px;top:31px;width:4.600px;height:2px;border-radius:1px;background:#7a747e"></div>
 <div class="abs" style="left:737px;top:31px;width:4.600px;height:2px;border-radius:1px;background:#7a747e"></div>
 <div class="abs" style="left:769.600px;top:31px;width:4.600px;height:2px;border-radius:1px;background:#7a747e"></div>
 <div class="abs" style="left:799.200px;top:31px;width:10.600px;height:2px;border-radius:1px;background:#1f6fd6"></div>
 <svg class="abs" style="left:1053.600px;top:15.200px" width="9.600" height="6" viewBox="0 0 96 60"><path d="M6 54L48 10l42 44" fill="none" stroke="#1f1f1f" stroke-width="10"/></svg>
 <svg class="abs" style="left:1070px;top:12.200px" width="11.400" height="11.800" viewBox="0 0 114 118"><defs><linearGradient id="qq" x1="0" y1="0" x2="0" y2="1"><stop offset="0" stop-color="#2b8cff"/><stop offset="1" stop-color="#49d6ff"/></linearGradient></defs><rect x="2" y="2" width="110" height="114" rx="18" fill="url(#qq)"/><rect x="26" y="26" width="62" height="56" rx="16" fill="#dff1ff"/><path d="M40 52q17 22 34 0" fill="none" stroke="#1d5fe0" stroke-width="9" stroke-linecap="round"/></svg>
 <svg class="abs" style="left:1091.600px;top:11.800px" width="10" height="12.600" viewBox="0 0 100 126"><rect x="32" y="4" width="36" height="70" rx="18" fill="none" stroke="#2461c8" stroke-width="9"/><path d="M12 56v6a38 38 0 0 0 76 0v-6M50 100v22" fill="none" stroke="#2461c8" stroke-width="9" stroke-linecap="round"/></svg>
 <div class="abs" style="left:1114.300px;top:9.500px;font-size:11.600px;line-height:17px;color:#1f1f1f;white-space:nowrap">中</div>
 <svg class="abs" style="left:1137.600px;top:13.200px" width="12.600" height="9.600" viewBox="0 0 126 96"><path d="M8 36a78 78 0 0 1 110 0" fill="none" stroke="#b9b3bd" stroke-width="9" stroke-linecap="round"/><path d="M26 54a52 52 0 0 1 74 0M43 71a28 28 0 0 1 40 0" fill="none" stroke="#1f1f1f" stroke-width="9" stroke-linecap="round"/><circle cx="63" cy="86" r="7" fill="#1f1f1f"/></svg>
 <svg class="abs" style="left:1154px;top:12.600px" width="14" height="11" viewBox="0 0 140 110"><path d="M8 38h22l30-26v86L30 72H8z" fill="none" stroke="#1f1f1f" stroke-width="9" stroke-linejoin="round"/><path d="M78 36a26 26 0 0 1 0 38M94 22a48 48 0 0 1 0 66" fill="none" stroke="#1f1f1f" stroke-width="8" stroke-linecap="round"/><path d="M112 10a68 68 0 0 1 0 90" fill="none" stroke="#b9b3bd" stroke-width="7" stroke-linecap="round"/></svg>
 <svg class="abs" style="left:1174px;top:12px" width="12.400" height="11.600" viewBox="0 0 124 116"><rect x="18" y="34" width="84" height="56" rx="12" fill="none" stroke="#1f1f1f" stroke-width="10"/><rect x="30" y="46" width="60" height="32" rx="4" fill="#1f1f1f"/><path d="M106 50h8q6 0 6 6v12q0 6-6 6h-8z" fill="#1f1f1f"/><path d="M8 12h26v18l-8 6h-10l-8-6z" fill="#1f1f1f"/><path d="M21 34v22" stroke="#1f1f1f" stroke-width="9"/></svg>
 <div class="abs" style="left:1185px;top:7.600px;width:50px;text-align:right;font-size:9.100px;line-height:11.300px;color:#1b1b1b;white-space:nowrap">13:30<br>2023/3/2</div>
 <div class="abs" style="left:1239.600px;top:10.600px;width:13.200px;height:13.200px;border-radius:50%;background:#0a6cd6;color:#fff;font-size:8.400px;line-height:13.200px;text-align:center">2</div>
</div>
</div></body></html>
